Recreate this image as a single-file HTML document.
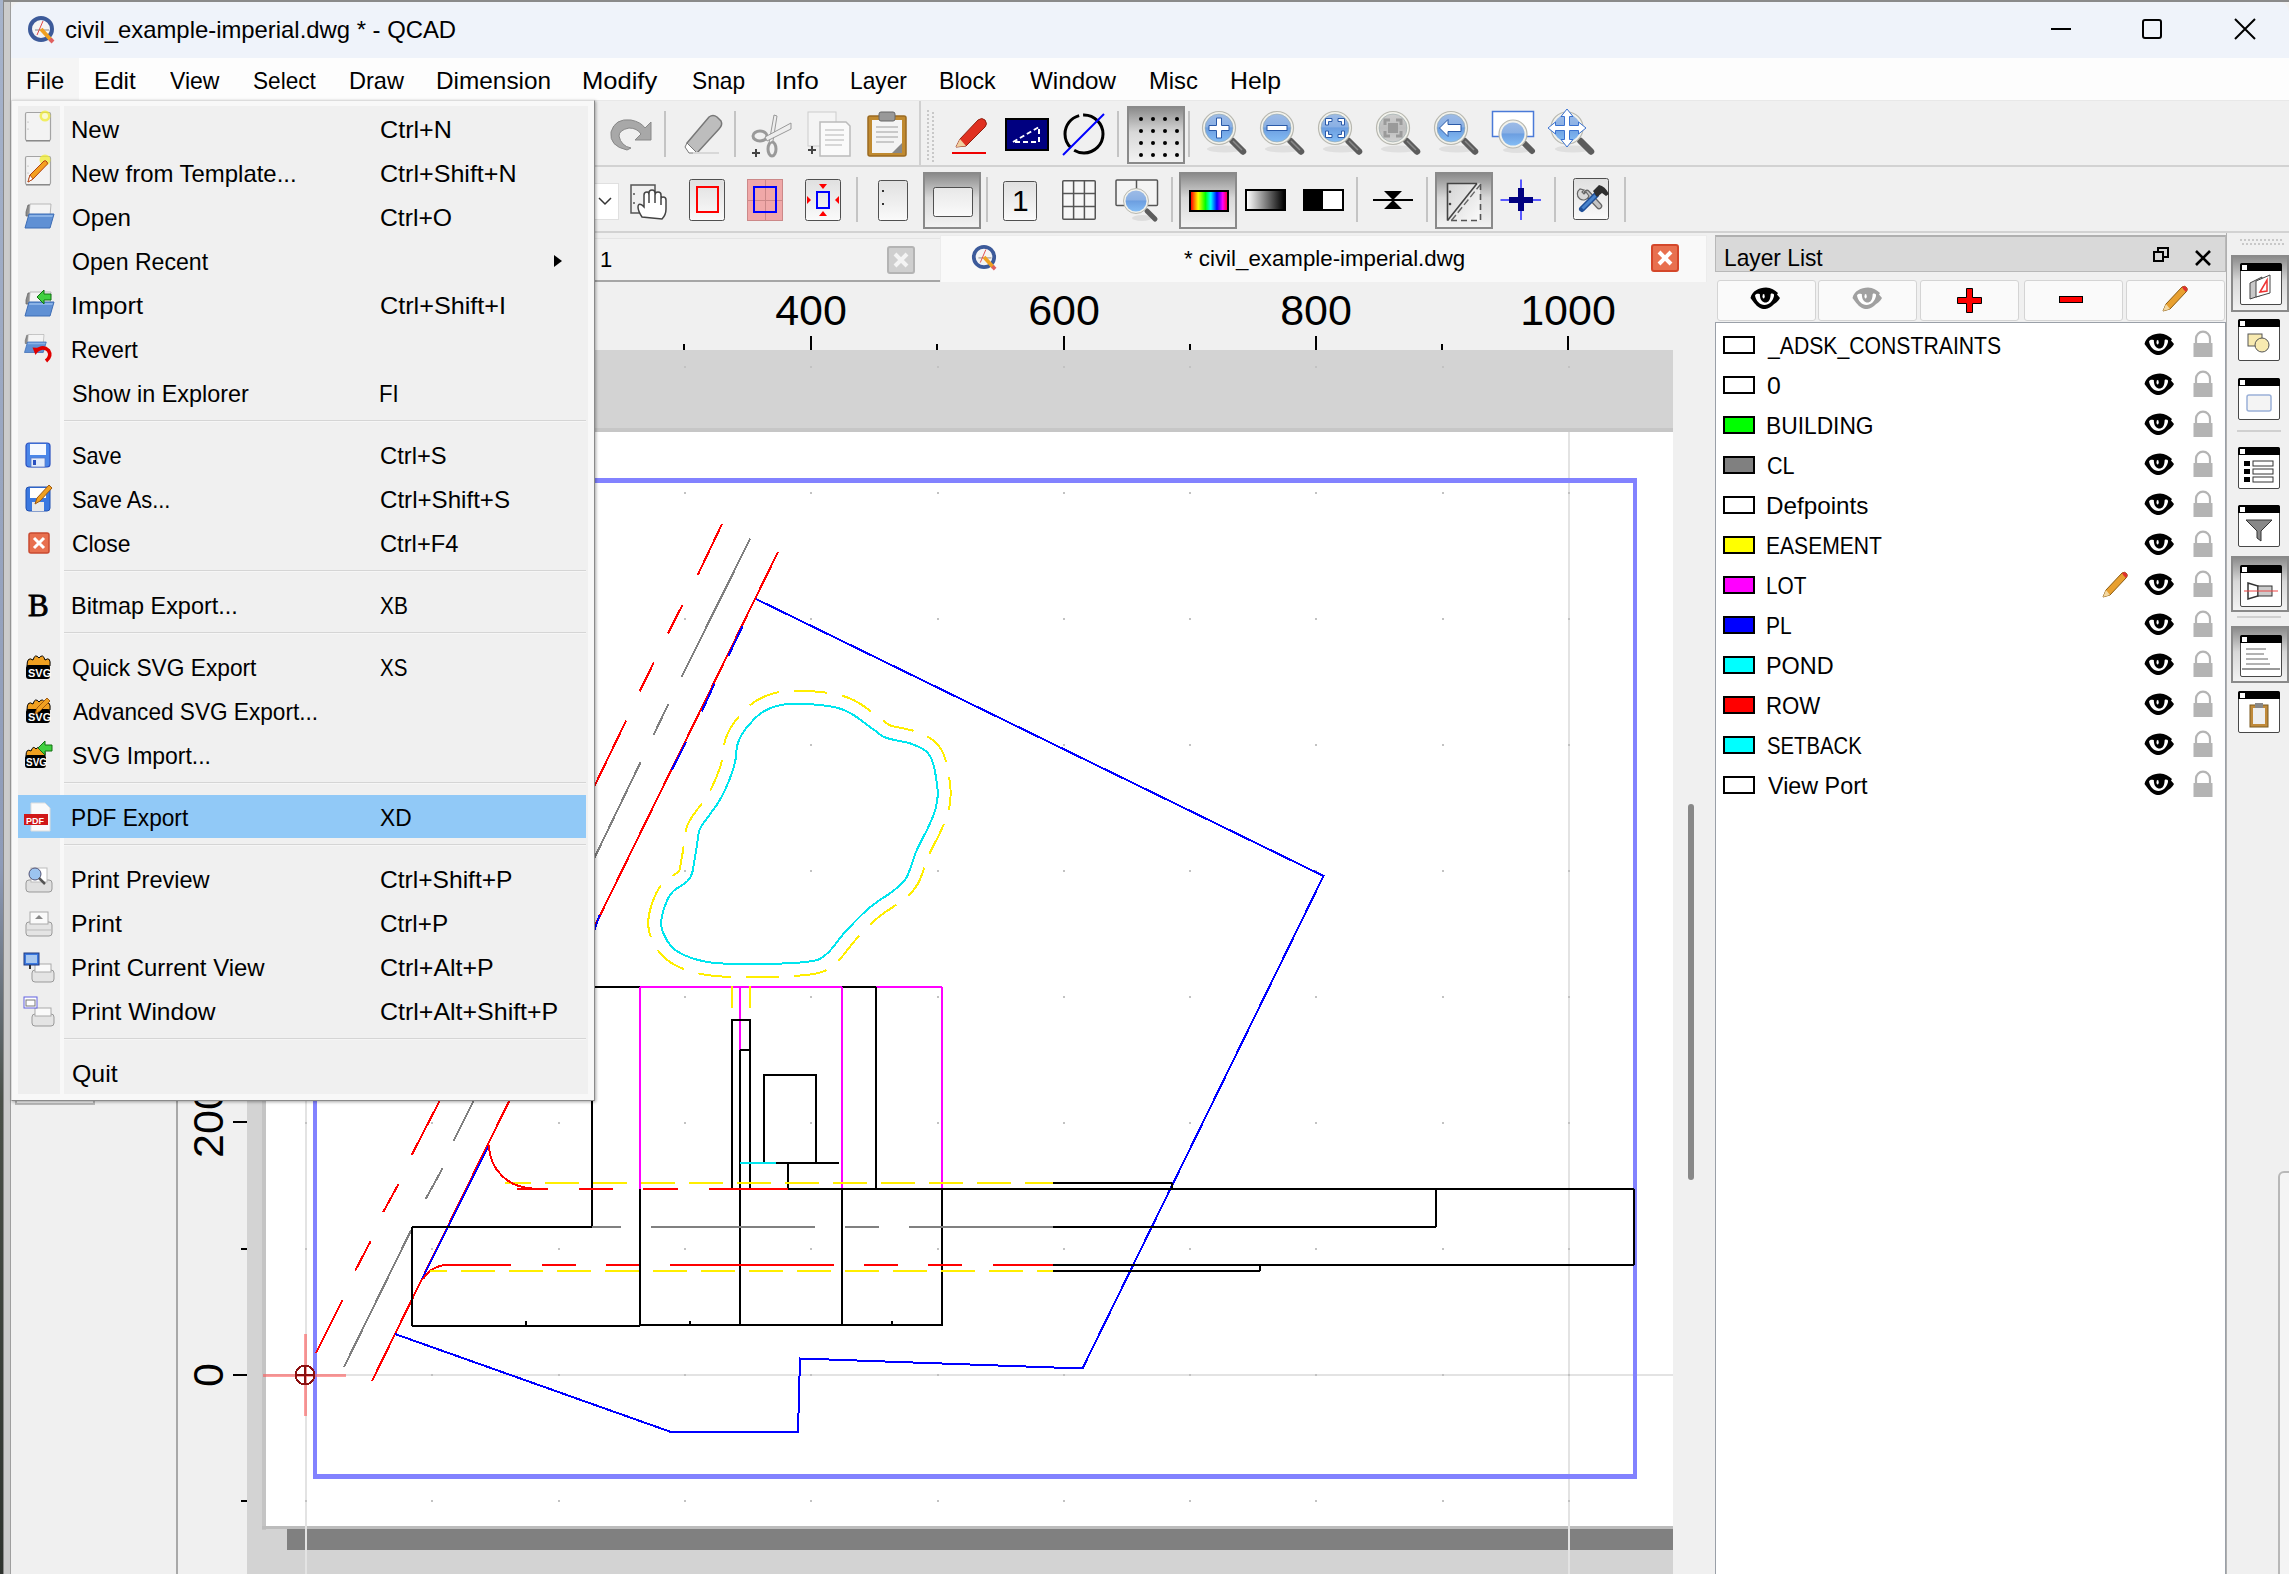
<!DOCTYPE html>
<html><head><meta charset="utf-8">
<style>
*{box-sizing:border-box;margin:0;padding:0}
html,body{width:2289px;height:1574px;overflow:hidden;background:#f0f0f0;font-family:"Liberation Sans",sans-serif;color:#000}
.a{position:absolute}
.t{position:absolute;white-space:pre;font-size:24px;line-height:28px;color:#000}
svg{position:absolute;overflow:visible}
</style></head><body>
<svg width="0" height="0" style="position:absolute"><defs>
<linearGradient id="lensblue" x1="0" y1="0" x2="0" y2="1"><stop offset="0" stop-color="#9dbbe6"/><stop offset="0.45" stop-color="#8ab0e4"/><stop offset="0.5" stop-color="#6c9ee0"/><stop offset="1" stop-color="#84bcf4"/></linearGradient>
<linearGradient id="lensgray" x1="0" y1="0" x2="0" y2="1"><stop offset="0" stop-color="#cfcfcf"/><stop offset="0.5" stop-color="#bdbdbd"/><stop offset="1" stop-color="#d0d0d0"/></linearGradient>
</defs></svg>

<div class="a" style="left:0px;top:0px;width:2289px;height:2px;background:#8a8a8a"></div>
<div class="a" style="left:0px;top:0px;width:3px;height:1574px;background:linear-gradient(#a6b3cb,#8e9bb8 55%,#4a5048 70%,#2e332e)"></div>
<div class="a" style="left:3px;top:2px;width:8px;height:1572px;background:#cbcbcb;border-left:1.5px solid #888;border-right:1.5px solid #9e9e9e"></div>
<div class="a" style="left:11px;top:2px;width:2278px;height:56px;background:#eff3fa;border-top-left-radius:10px;border-top-right-radius:10px"></div>
<svg class="a" style="left:27px;top:15px;" width="30" height="30" viewBox="0 0 30 30"><circle cx="14" cy="14" r="11" fill="#f4f4f4" stroke="#3c5a9a" stroke-width="4"/>
<line x1="8" y1="15" x2="22" y2="15" stroke="#888" stroke-width="1"/><line x1="10" y1="20" x2="16" y2="6" stroke="#d44" stroke-width="1"/>
<line x1="14" y1="14" x2="24" y2="25" stroke="#f0a020" stroke-width="4"/><line x1="23" y1="24" x2="26" y2="27" stroke="#e06060" stroke-width="4"/></svg>
<div class="t" style="left:65.31px;top:16px;font-size:24px;line-height:28px;transform:scaleX(0.994);transform-origin:0 0;">civil_example-imperial.dwg * - QCAD</div>
<div class="a" style="left:2051px;top:28px;width:20px;height:2px;background:#000"></div>
<div class="a" style="left:2142px;top:19px;width:20px;height:20px;border:2px solid #000;border-radius:3px"></div>
<svg class="a" style="left:2235px;top:19px;" width="20" height="20" viewBox="0 0 20 20"><path d="M0 0L20 20M20 0L0 20" stroke="#000" stroke-width="2"/></svg>
<div class="a" style="left:11px;top:58px;width:2278px;height:43px;background:#fdfdfd;border-bottom:1px solid #e8e8e8"></div>
<div class="a" style="left:11px;top:58px;width:68px;height:42px;background:#f5f5f5"></div>
<div class="t" style="left:25.53px;top:67px;font-size:24px;line-height:28px;transform:scaleX(0.986);transform-origin:0 0;">File</div>
<div class="t" style="left:94.48px;top:67px;font-size:24px;line-height:28px;transform:scaleX(1.008);transform-origin:0 0;">Edit</div>
<div class="t" style="left:169.90px;top:67px;font-size:24px;line-height:28px;transform:scaleX(0.958);transform-origin:0 0;">View</div>
<div class="t" style="left:252.76px;top:67px;font-size:24px;line-height:28px;transform:scaleX(0.942);transform-origin:0 0;">Select</div>
<div class="t" style="left:348.74px;top:67px;font-size:24px;line-height:28px;transform:scaleX(0.981);transform-origin:0 0;">Draw</div>
<div class="t" style="left:435.97px;top:67px;font-size:24px;line-height:28px;transform:scaleX(1.015);transform-origin:0 0;">Dimension</div>
<div class="t" style="left:582.07px;top:67px;font-size:24px;line-height:28px;transform:scaleX(1.064);transform-origin:0 0;">Modify</div>
<div class="t" style="left:691.65px;top:67px;font-size:24px;line-height:28px;transform:scaleX(0.946);transform-origin:0 0;">Snap</div>
<div class="t" style="left:775.42px;top:67px;font-size:24px;line-height:28px;transform:scaleX(1.092);transform-origin:0 0;">Info</div>
<div class="t" style="left:850.10px;top:67px;font-size:24px;line-height:28px;transform:scaleX(0.948);transform-origin:0 0;">Layer</div>
<div class="t" style="left:938.97px;top:67px;font-size:24px;line-height:28px;transform:scaleX(0.965);transform-origin:0 0;">Block</div>
<div class="t" style="left:1030.40px;top:67px;font-size:24px;line-height:28px;transform:scaleX(1.008);transform-origin:0 0;">Window</div>
<div class="t" style="left:1149.02px;top:67px;font-size:24px;line-height:28px;transform:scaleX(0.991);transform-origin:0 0;">Misc</div>
<div class="t" style="left:1229.74px;top:67px;font-size:24px;line-height:28px;transform:scaleX(1.032);transform-origin:0 0;">Help</div>
<div class="a" style="left:11px;top:101px;width:2278px;height:131px;background:#f0f0f0"></div>
<div class="a" style="left:11px;top:165px;width:2278px;height:2px;background:#d2d2d2"></div>
<div class="a" style="left:11px;top:231px;width:2278px;height:2px;background:#d2d2d2"></div>
<div class="a" style="left:11px;top:233px;width:166px;height:1341px;background:#f0f0f0"></div>
<div class="a" style="left:176px;top:233px;width:2px;height:1341px;background:#a8a8a8"></div>
<div class="a" style="left:15px;top:1060px;width:80px;height:45px;border:2px solid #b8b8b8;border-top:none"></div>
<div class="a" style="left:178px;top:233px;width:1537px;height:49px;background:#f0f0f0"></div>
<div class="a" style="left:178px;top:238px;width:762px;height:42px;background:#f2f2f2;border-top:1px solid #e4e4e4"></div>
<div class="a" style="left:178px;top:280px;width:762px;height:2px;background:#a6a6a6"></div>
<div class="a" style="left:940px;top:235px;width:767px;height:47px;background:#f9f9f9;border:1px solid #ececec;border-bottom:none"></div>
<div class="t" style="left:600px;top:247px;font-size:22px;line-height:26px;">1</div>
<div class="a" style="left:887px;top:246px;width:28px;height:28px;background:#cfcfcf;border:2px solid #b4b4b4;border-radius:3px"></div>
<svg class="a" style="left:893px;top:252px;" width="16" height="16" viewBox="0 0 16 16"><path d="M2 2L14 14M14 2L2 14" stroke="#f4f4f4" stroke-width="4"/></svg>
<svg class="a" style="left:970px;top:243px;transform:scale(0.93)" width="28" height="28" viewBox="0 0 28 28"><circle cx="14" cy="14" r="11" fill="#f4f4f4" stroke="#3c5a9a" stroke-width="4"/>
<line x1="8" y1="15" x2="22" y2="15" stroke="#888" stroke-width="1"/><line x1="10" y1="20" x2="16" y2="6" stroke="#d44" stroke-width="1"/>
<line x1="14" y1="14" x2="24" y2="25" stroke="#f0a020" stroke-width="4"/><line x1="23" y1="24" x2="26" y2="27" stroke="#e06060" stroke-width="4"/></svg>
<div class="t" style="left:1184.39px;top:246px;font-size:22px;line-height:26px;transform:scaleX(1.013);transform-origin:0 0;">* civil_example-imperial.dwg</div>
<div class="a" style="left:1651px;top:244px;width:28px;height:28px;background:#e8704f;border:2px solid #d4472a;border-radius:3px"></div>
<svg class="a" style="left:1657px;top:250px;" width="16" height="16" viewBox="0 0 16 16"><path d="M2 2L14 14M14 2L2 14" stroke="#fff" stroke-width="4"/></svg>
<div class="a" style="left:178px;top:282px;width:1495px;height:68px;background:#f0f0f0"></div>
<div class="a" style="left:178px;top:350px;width:69px;height:1224px;background:#f0f0f0"></div>
<div class="t" style="left:775.0px;top:285px;width:72px;text-align:center;font-size:43px;line-height:50px">400</div>
<div class="t" style="left:1028.0px;top:285px;width:72px;text-align:center;font-size:43px;line-height:50px">600</div>
<div class="t" style="left:1280.0px;top:285px;width:72px;text-align:center;font-size:43px;line-height:50px">800</div>
<div class="t" style="left:1520.0px;top:285px;width:96px;text-align:center;font-size:43px;line-height:50px">1000</div>
<div class="a" style="left:810.25px;top:336px;width:1.5px;height:14px;background:#000"></div>
<div class="a" style="left:1063.25px;top:336px;width:1.5px;height:14px;background:#000"></div>
<div class="a" style="left:1315.25px;top:336px;width:1.5px;height:14px;background:#000"></div>
<div class="a" style="left:1567.25px;top:336px;width:1.5px;height:14px;background:#000"></div>
<div class="a" style="left:683.25px;top:344px;width:1.5px;height:6px;background:#000"></div>
<div class="a" style="left:936.25px;top:344px;width:1.5px;height:6px;background:#000"></div>
<div class="a" style="left:1189.25px;top:344px;width:1.5px;height:6px;background:#000"></div>
<div class="a" style="left:1441.25px;top:344px;width:1.5px;height:6px;background:#000"></div>
<div class="a" style="left:233px;top:1121.25px;width:14px;height:1.5px;background:#000"></div>
<div class="a" style="left:233px;top:1374.25px;width:14px;height:1.5px;background:#000"></div>
<div class="a" style="left:241px;top:1248.25px;width:6px;height:1.5px;background:#000"></div>
<div class="a" style="left:241px;top:1500.25px;width:6px;height:1.5px;background:#000"></div>
<div class="t" style="left:160px;top:1097px;width:96px;height:50px;text-align:center;font-size:43px;line-height:50px;transform:rotate(-90deg);transform-origin:48px 25px">200</div>
<div class="t" style="left:160px;top:1350px;width:96px;height:50px;text-align:center;font-size:43px;line-height:50px;transform:rotate(-90deg);transform-origin:48px 25px">0</div>
<div class="a" style="left:247px;top:350px;width:1426px;height:1224px;background:#d3d3d3"></div>
<div class="a" style="left:266px;top:432px;width:1407px;height:1094px;background:#fff"></div>
<div class="a" style="left:262px;top:432px;width:4px;height:1098px;background:#c4c4c4"></div>
<div class="a" style="left:262px;top:1526px;width:1411px;height:3px;background:#bcbcbc"></div>
<div class="a" style="left:287px;top:1529px;width:1386px;height:21px;background:#808080"></div>
<div class="a" style="left:247px;top:428px;width:1426px;height:4px;background:#c6c6c6"></div>
<div class="a" style="left:1673px;top:282px;width:42px;height:1292px;background:#f0f0f0"></div>
<div class="a" style="left:1688px;top:804px;width:6px;height:376px;background:#888;border-radius:3px"></div>
<svg class="a" style="left:0;top:0" width="2289" height="1574" viewBox="0 0 2289 1574"><defs><clipPath id="cv"><rect x="247" y="350" width="1426" height="1224"/></clipPath></defs><g clip-path="url(#cv)" shape-rendering="crispEdges"><line x1="306" y1="350" x2="306" y2="1574" stroke="#e3e3e3" stroke-width="2"/><line x1="1568.5" y1="432" x2="1568.5" y2="1574" stroke="#e3e3e3" stroke-width="2"/><line x1="266" y1="1375" x2="1673" y2="1375" stroke="#e3e3e3" stroke-width="2"/><rect x="305" y="1500" width="2" height="2" fill="#c2c2c2"/><rect x="305" y="1374" width="2" height="2" fill="#c2c2c2"/><rect x="305" y="1248" width="2" height="2" fill="#c2c2c2"/><rect x="305" y="1122" width="2" height="2" fill="#c2c2c2"/><rect x="305" y="996" width="2" height="2" fill="#c2c2c2"/><rect x="305" y="870" width="2" height="2" fill="#c2c2c2"/><rect x="305" y="744" width="2" height="2" fill="#c2c2c2"/><rect x="305" y="618" width="2" height="2" fill="#c2c2c2"/><rect x="305" y="492" width="2" height="2" fill="#c2c2c2"/><rect x="305" y="366" width="2" height="2" fill="#c2c2c2"/><rect x="431" y="1500" width="2" height="2" fill="#c2c2c2"/><rect x="431" y="1374" width="2" height="2" fill="#c2c2c2"/><rect x="431" y="1248" width="2" height="2" fill="#c2c2c2"/><rect x="431" y="1122" width="2" height="2" fill="#c2c2c2"/><rect x="431" y="996" width="2" height="2" fill="#c2c2c2"/><rect x="431" y="870" width="2" height="2" fill="#c2c2c2"/><rect x="431" y="744" width="2" height="2" fill="#c2c2c2"/><rect x="431" y="618" width="2" height="2" fill="#c2c2c2"/><rect x="431" y="492" width="2" height="2" fill="#c2c2c2"/><rect x="431" y="366" width="2" height="2" fill="#c2c2c2"/><rect x="558" y="1500" width="2" height="2" fill="#c2c2c2"/><rect x="558" y="1374" width="2" height="2" fill="#c2c2c2"/><rect x="558" y="1248" width="2" height="2" fill="#c2c2c2"/><rect x="558" y="1122" width="2" height="2" fill="#c2c2c2"/><rect x="558" y="996" width="2" height="2" fill="#c2c2c2"/><rect x="558" y="870" width="2" height="2" fill="#c2c2c2"/><rect x="558" y="744" width="2" height="2" fill="#c2c2c2"/><rect x="558" y="618" width="2" height="2" fill="#c2c2c2"/><rect x="558" y="492" width="2" height="2" fill="#c2c2c2"/><rect x="558" y="366" width="2" height="2" fill="#c2c2c2"/><rect x="684" y="1500" width="2" height="2" fill="#c2c2c2"/><rect x="684" y="1374" width="2" height="2" fill="#c2c2c2"/><rect x="684" y="1248" width="2" height="2" fill="#c2c2c2"/><rect x="684" y="1122" width="2" height="2" fill="#c2c2c2"/><rect x="684" y="996" width="2" height="2" fill="#c2c2c2"/><rect x="684" y="870" width="2" height="2" fill="#c2c2c2"/><rect x="684" y="744" width="2" height="2" fill="#c2c2c2"/><rect x="684" y="618" width="2" height="2" fill="#c2c2c2"/><rect x="684" y="492" width="2" height="2" fill="#c2c2c2"/><rect x="684" y="366" width="2" height="2" fill="#c2c2c2"/><rect x="810" y="1500" width="2" height="2" fill="#c2c2c2"/><rect x="810" y="1374" width="2" height="2" fill="#c2c2c2"/><rect x="810" y="1248" width="2" height="2" fill="#c2c2c2"/><rect x="810" y="1122" width="2" height="2" fill="#c2c2c2"/><rect x="810" y="996" width="2" height="2" fill="#c2c2c2"/><rect x="810" y="870" width="2" height="2" fill="#c2c2c2"/><rect x="810" y="744" width="2" height="2" fill="#c2c2c2"/><rect x="810" y="618" width="2" height="2" fill="#c2c2c2"/><rect x="810" y="492" width="2" height="2" fill="#c2c2c2"/><rect x="810" y="366" width="2" height="2" fill="#c2c2c2"/><rect x="937" y="1500" width="2" height="2" fill="#c2c2c2"/><rect x="937" y="1374" width="2" height="2" fill="#c2c2c2"/><rect x="937" y="1248" width="2" height="2" fill="#c2c2c2"/><rect x="937" y="1122" width="2" height="2" fill="#c2c2c2"/><rect x="937" y="996" width="2" height="2" fill="#c2c2c2"/><rect x="937" y="870" width="2" height="2" fill="#c2c2c2"/><rect x="937" y="744" width="2" height="2" fill="#c2c2c2"/><rect x="937" y="618" width="2" height="2" fill="#c2c2c2"/><rect x="937" y="492" width="2" height="2" fill="#c2c2c2"/><rect x="937" y="366" width="2" height="2" fill="#c2c2c2"/><rect x="1063" y="1500" width="2" height="2" fill="#c2c2c2"/><rect x="1063" y="1374" width="2" height="2" fill="#c2c2c2"/><rect x="1063" y="1248" width="2" height="2" fill="#c2c2c2"/><rect x="1063" y="1122" width="2" height="2" fill="#c2c2c2"/><rect x="1063" y="996" width="2" height="2" fill="#c2c2c2"/><rect x="1063" y="870" width="2" height="2" fill="#c2c2c2"/><rect x="1063" y="744" width="2" height="2" fill="#c2c2c2"/><rect x="1063" y="618" width="2" height="2" fill="#c2c2c2"/><rect x="1063" y="492" width="2" height="2" fill="#c2c2c2"/><rect x="1063" y="366" width="2" height="2" fill="#c2c2c2"/><rect x="1189" y="1500" width="2" height="2" fill="#c2c2c2"/><rect x="1189" y="1374" width="2" height="2" fill="#c2c2c2"/><rect x="1189" y="1248" width="2" height="2" fill="#c2c2c2"/><rect x="1189" y="1122" width="2" height="2" fill="#c2c2c2"/><rect x="1189" y="996" width="2" height="2" fill="#c2c2c2"/><rect x="1189" y="870" width="2" height="2" fill="#c2c2c2"/><rect x="1189" y="744" width="2" height="2" fill="#c2c2c2"/><rect x="1189" y="618" width="2" height="2" fill="#c2c2c2"/><rect x="1189" y="492" width="2" height="2" fill="#c2c2c2"/><rect x="1189" y="366" width="2" height="2" fill="#c2c2c2"/><rect x="1315" y="1500" width="2" height="2" fill="#c2c2c2"/><rect x="1315" y="1374" width="2" height="2" fill="#c2c2c2"/><rect x="1315" y="1248" width="2" height="2" fill="#c2c2c2"/><rect x="1315" y="1122" width="2" height="2" fill="#c2c2c2"/><rect x="1315" y="996" width="2" height="2" fill="#c2c2c2"/><rect x="1315" y="870" width="2" height="2" fill="#c2c2c2"/><rect x="1315" y="744" width="2" height="2" fill="#c2c2c2"/><rect x="1315" y="618" width="2" height="2" fill="#c2c2c2"/><rect x="1315" y="492" width="2" height="2" fill="#c2c2c2"/><rect x="1315" y="366" width="2" height="2" fill="#c2c2c2"/><rect x="1442" y="1500" width="2" height="2" fill="#c2c2c2"/><rect x="1442" y="1374" width="2" height="2" fill="#c2c2c2"/><rect x="1442" y="1248" width="2" height="2" fill="#c2c2c2"/><rect x="1442" y="1122" width="2" height="2" fill="#c2c2c2"/><rect x="1442" y="996" width="2" height="2" fill="#c2c2c2"/><rect x="1442" y="870" width="2" height="2" fill="#c2c2c2"/><rect x="1442" y="744" width="2" height="2" fill="#c2c2c2"/><rect x="1442" y="618" width="2" height="2" fill="#c2c2c2"/><rect x="1442" y="492" width="2" height="2" fill="#c2c2c2"/><rect x="1442" y="366" width="2" height="2" fill="#c2c2c2"/><rect x="1568" y="1500" width="2" height="2" fill="#c2c2c2"/><rect x="1568" y="1374" width="2" height="2" fill="#c2c2c2"/><rect x="1568" y="1248" width="2" height="2" fill="#c2c2c2"/><rect x="1568" y="1122" width="2" height="2" fill="#c2c2c2"/><rect x="1568" y="996" width="2" height="2" fill="#c2c2c2"/><rect x="1568" y="870" width="2" height="2" fill="#c2c2c2"/><rect x="1568" y="744" width="2" height="2" fill="#c2c2c2"/><rect x="1568" y="618" width="2" height="2" fill="#c2c2c2"/><rect x="1568" y="492" width="2" height="2" fill="#c2c2c2"/><rect x="1568" y="366" width="2" height="2" fill="#c2c2c2"/><rect x="313" y="478" width="1324" height="5" fill="#8282ff"/><rect x="313" y="1474" width="1324" height="5" fill="#8282ff"/><rect x="313" y="478" width="4" height="1001" fill="#8282ff"/><rect x="1633" y="478" width="4" height="1001" fill="#8282ff"/><line x1="316" y1="1353" x2="342.6" y2="1299.8" stroke="#ff0000" stroke-width="2"/><line x1="355.3" y1="1270.6" x2="370.5" y2="1241.4" stroke="#ff0000" stroke-width="2"/><line x1="383.3" y1="1212" x2="398.5" y2="1184" stroke="#ff0000" stroke-width="2"/><line x1="411.7" y1="1155" x2="455" y2="1071" stroke="#ff0000" stroke-width="2"/><line x1="580" y1="816" x2="626.2" y2="720.5" stroke="#ff0000" stroke-width="2"/><line x1="639.6" y1="691.5" x2="653.9" y2="662.4" stroke="#ff0000" stroke-width="2"/><line x1="668" y1="633.3" x2="682.6" y2="604.7" stroke="#ff0000" stroke-width="2"/><line x1="697.7" y1="575" x2="722" y2="524" stroke="#ff0000" stroke-width="2"/><line x1="344" y1="1367" x2="411.2" y2="1230" stroke="#808080" stroke-width="2"/><line x1="425.7" y1="1199" x2="442.5" y2="1168.4" stroke="#808080" stroke-width="2"/><line x1="453.6" y1="1141" x2="490" y2="1068" stroke="#808080" stroke-width="2"/><line x1="580" y1="888" x2="640.5" y2="762.3" stroke="#808080" stroke-width="2"/><line x1="653.4" y1="735.3" x2="668.2" y2="704.3" stroke="#808080" stroke-width="2"/><line x1="681.6" y1="677" x2="750.3" y2="538.4" stroke="#808080" stroke-width="2"/><line x1="372" y1="1381" x2="778" y2="552" stroke="#ff0000" stroke-width="2"/><line x1="422" y1="1279" x2="489" y2="1145" stroke="#0000ff" stroke-width="2"/><line x1="594.6" y1="930" x2="599.7" y2="914.8" stroke="#0000ff" stroke-width="2"/><line x1="671.8" y1="770" x2="686" y2="742" stroke="#0000ff" stroke-width="2"/><line x1="701.8" y1="711.5" x2="714.5" y2="683.6" stroke="#0000ff" stroke-width="2"/><line x1="728.5" y1="655.6" x2="742.5" y2="626.4" stroke="#0000ff" stroke-width="2"/><polyline points="756.0,599.0 1323.5,876.0 1082.5,1368.5 800.0,1358.5 798.0,1432.0 671.0,1432.0 395.0,1334.0" fill="none" stroke="#0000ff" stroke-width="2" stroke-linejoin="miter"/><polygon points="661.7,917.8 662.4,914.1 663.5,910.1 665.0,905.8 666.6,901.5 668.6,897.5 670.8,894.0 673.5,891.0 676.8,888.5 680.3,886.2 683.8,883.9 686.9,881.6 689.3,879.0 690.9,876.2 692.1,873.2 692.8,870.2 693.3,867.0 693.8,863.8 694.4,860.6 695.1,857.2 695.6,853.6 696.2,850.0 696.7,846.4 697.2,843.0 697.7,840.0 698.1,837.5 698.3,835.5 698.5,833.7 698.9,831.9 699.7,829.7 701.0,827.0 703.1,823.6 705.9,819.7 709.1,815.4 712.3,811.1 715.4,806.9 718.0,803.0 720.1,799.4 722.0,796.0 723.6,792.8 725.2,789.5 726.6,786.3 728.0,783.0 729.4,779.7 730.6,776.3 731.8,773.0 732.9,769.7 733.9,766.4 734.8,763.0 735.5,759.6 735.9,756.1 736.2,752.6 736.6,749.2 737.1,745.9 738.0,742.7 739.2,739.7 740.6,736.8 742.1,734.0 743.9,731.3 745.8,728.7 748.0,726.0 750.4,723.3 752.9,720.5 755.6,717.7 758.6,715.1 761.7,712.7 765.0,710.7 768.4,709.0 771.9,707.5 775.5,706.3 779.5,705.3 783.8,704.5 788.6,704.0 794.2,703.7 800.5,703.8 807.2,704.0 813.9,704.5 820.2,705.0 825.7,705.7 830.4,706.4 834.5,707.2 838.2,708.1 841.7,709.2 845.2,710.7 849.0,712.4 853.1,714.7 857.3,717.5 861.5,720.6 865.6,723.7 869.4,726.6 872.8,729.0 875.5,730.9 877.5,732.6 879.2,734.0 881.0,735.2 883.1,736.5 886.0,737.7 889.8,738.9 894.3,739.9 899.3,740.9 904.2,741.9 908.9,743.0 913.0,744.4 916.5,745.9 919.8,747.3 922.8,748.9 925.5,750.8 927.9,753.1 930.0,756.0 931.8,759.7 933.3,764.1 934.5,769.0 935.4,773.9 936.2,778.7 936.8,783.0 937.3,786.7 937.6,790.2 937.6,793.4 937.6,796.6 937.3,799.7 936.8,803.0 936.1,806.3 935.3,809.6 934.2,812.8 933.0,816.2 931.6,819.7 930.0,823.5 928.1,827.6 925.9,832.0 923.5,836.6 921.1,841.3 918.7,845.9 916.6,850.5 914.8,855.1 913.1,860.0 911.6,864.8 910.0,869.4 908.3,873.7 906.5,877.4 904.6,880.4 902.6,882.8 900.6,884.8 898.4,886.7 895.9,888.7 893.0,891.0 889.7,893.5 885.9,896.1 881.9,898.7 877.7,901.5 873.5,904.5 869.5,907.7 865.5,911.2 861.5,915.0 857.6,918.9 853.6,923.0 849.7,927.0 846.0,931.0 842.4,935.1 839.0,939.5 835.6,943.9 832.3,948.1 829.0,951.8 825.7,954.8 822.7,957.0 820.2,958.6 817.7,959.8 814.7,960.6 810.8,961.3 805.5,962.0 798.4,962.7 789.7,963.2 780.0,963.6 770.1,963.8 760.4,964.0 751.6,964.0 743.6,964.0 735.8,963.9 728.2,963.8 721.0,963.4 714.2,962.9 707.8,962.0 701.8,960.8 696.1,959.4 690.8,957.7 685.9,955.8 681.4,953.7 677.5,951.5 674.1,949.1 671.3,946.3 669.0,943.4 667.0,940.5 665.4,937.5 664.0,934.6 662.8,931.9 662.0,929.3 661.4,926.6 661.2,923.9 661.3,921.0" fill="none" stroke="#00e5ee" stroke-width="2" stroke-linejoin="miter"/><polygon points="648.9,915.6 649.8,911.1 651.1,906.3 652.7,901.3 654.8,896.3 657.2,891.3 660.4,886.2 664.7,881.5 669.2,877.9 673.2,875.3 676.4,873.2 678.2,871.9 678.9,871.2 679.2,870.6 679.6,869.4 680.1,867.5 680.5,865.0 681.0,861.7 681.6,858.2 682.3,854.9 682.8,851.6 683.3,848.1 683.8,844.5 684.3,840.9 684.9,837.9 685.2,835.8 685.4,834.1 685.7,831.6 686.4,828.2 687.7,824.5 689.7,820.6 692.3,816.4 695.4,812.0 698.7,807.6 701.9,803.4 704.7,799.5 707.0,796.1 708.8,793.0 710.5,790.0 712.0,787.0 713.3,784.1 714.7,781.1 716.0,778.0 717.3,774.9 718.4,771.8 719.5,768.8 720.5,765.8 721.4,762.8 722.1,760.1 722.6,757.6 723.0,754.8 723.3,751.4 723.7,747.5 724.4,743.1 725.7,738.6 727.3,734.5 729.0,730.8 731.0,727.3 733.2,723.9 735.5,720.7 738.0,717.7 740.6,714.6 743.5,711.5 746.7,708.3 750.3,705.1 754.3,702.0 758.6,699.4 762.9,697.2 767.3,695.4 771.9,693.8 776.8,692.6 782.0,691.7 787.6,691.0 793.9,690.7 800.8,690.8 807.8,691.0 814.9,691.5 821.5,692.1 827.4,692.8 832.6,693.6 837.2,694.5 841.7,695.6 846.1,697.0 850.4,698.7 855.0,700.8 859.9,703.6 864.7,706.8 869.3,710.1 873.5,713.3 877.2,716.1 880.4,718.5 883.3,720.6 885.7,722.5 887.1,723.7 887.9,724.3 888.8,724.8 890.4,725.5 893.1,726.3 897.0,727.2 901.8,728.1 907.1,729.2 912.5,730.5 917.6,732.2 921.7,733.9 925.5,735.7 929.6,737.8 933.7,740.8 937.7,744.6 941.2,749.3 943.9,754.8 945.8,760.5 947.2,766.2 948.2,771.7 949.0,776.8 949.7,781.2 950.2,785.4 950.5,789.4 950.6,793.4 950.5,797.3 950.2,801.2 949.6,805.2 948.8,809.2 947.8,813.2 946.5,817.0 945.1,820.8 943.6,824.6 941.9,828.7 939.8,833.3 937.5,838.0 935.0,842.6 932.6,847.2 930.4,851.6 928.5,855.6 927.0,859.6 925.5,864.1 923.9,868.9 922.2,873.8 920.2,878.9 917.8,883.8 915.1,888.0 912.3,891.5 909.4,894.4 906.6,896.8 904.0,898.9 901.0,901.3 897.2,904.1 893.1,906.9 889.1,909.6 885.1,912.2 881.3,914.9 877.9,917.7 874.3,920.8 870.6,924.3 866.8,928.1 863.0,932.0 859.2,935.9 855.7,939.7 852.5,943.4 849.3,947.5 845.9,951.9 842.3,956.4 838.3,960.9 834.0,964.8 830.1,967.7 826.4,970.0 822.1,972.0 817.5,973.3 812.8,974.1 806.9,974.9 799.3,975.6 790.3,976.2 780.4,976.6 770.3,976.8 760.5,977.0 751.6,977.0 743.5,977.0 735.6,976.9 727.8,976.8 720.2,976.4 712.8,975.8 705.7,974.8 698.9,973.5 692.5,971.9 686.5,970.0 680.8,967.8 675.5,965.3 670.5,962.4 665.8,959.0 661.8,955.1 658.5,951.1 655.9,947.2 653.9,943.5 652.2,940.0 650.7,936.5 649.4,932.6 648.6,928.5 648.2,924.2 648.3,920.0" fill="none" stroke="#ffee00" stroke-width="2" stroke-dasharray="33 15" stroke-linejoin="miter"/><line x1="594" y1="986.6" x2="640" y2="986.6" stroke="#000000" stroke-width="2"/><line x1="640" y1="986.6" x2="842" y2="986.6" stroke="#ff00ff" stroke-width="2"/><line x1="842" y1="986.6" x2="875.5" y2="986.6" stroke="#000000" stroke-width="2"/><line x1="875.5" y1="986.6" x2="942" y2="986.6" stroke="#ff00ff" stroke-width="2"/><line x1="640" y1="986.6" x2="640" y2="1189" stroke="#ff00ff" stroke-width="2"/><line x1="842" y1="986.6" x2="842" y2="1189" stroke="#ff00ff" stroke-width="2"/><line x1="942" y1="986.6" x2="942" y2="1189" stroke="#ff00ff" stroke-width="2"/><line x1="740" y1="986.6" x2="740" y2="1050" stroke="#ff00ff" stroke-width="2"/><line x1="732" y1="986" x2="732" y2="1008" stroke="#ffee00" stroke-width="2"/><line x1="750" y1="986" x2="750" y2="1008" stroke="#ffee00" stroke-width="2"/><rect x="732" y="1020" width="18" height="169" fill="none" stroke="#000000" stroke-width="2"/><line x1="740" y1="1050" x2="740" y2="1325" stroke="#000000" stroke-width="2"/><line x1="740" y1="1050" x2="750" y2="1050" stroke="#000000" stroke-width="2"/><rect x="763.6" y="1075" width="52.8" height="87.7" fill="none" stroke="#000000" stroke-width="2"/><line x1="740" y1="1162.7" x2="775.5" y2="1162.7" stroke="#00e5ee" stroke-width="2"/><line x1="775.5" y1="1162.7" x2="838.8" y2="1162.7" stroke="#000000" stroke-width="2"/><line x1="788" y1="1162.7" x2="788" y2="1189" stroke="#000000" stroke-width="2"/><line x1="875.5" y1="986.6" x2="875.5" y2="1189" stroke="#000000" stroke-width="2"/><line x1="592" y1="1000" x2="592" y2="1226.6" stroke="#000000" stroke-width="2"/><line x1="412" y1="1226.6" x2="592" y2="1226.6" stroke="#000000" stroke-width="2"/><line x1="412" y1="1226.6" x2="412" y2="1326" stroke="#000000" stroke-width="2"/><line x1="412" y1="1326" x2="640" y2="1326" stroke="#000000" stroke-width="2"/><line x1="640" y1="1325" x2="942" y2="1325" stroke="#000000" stroke-width="2"/><line x1="526" y1="1326" x2="526" y2="1321" stroke="#000000" stroke-width="2"/><line x1="690" y1="1326" x2="690" y2="1321" stroke="#000000" stroke-width="2"/><line x1="892" y1="1326" x2="892" y2="1321" stroke="#000000" stroke-width="2"/><line x1="640" y1="1189" x2="640" y2="1326" stroke="#000000" stroke-width="2"/><line x1="842" y1="1189" x2="842" y2="1326" stroke="#000000" stroke-width="2"/><line x1="942" y1="1189" x2="942" y2="1326" stroke="#000000" stroke-width="2"/><line x1="788" y1="1189" x2="1634" y2="1189" stroke="#000000" stroke-width="2"/><line x1="1634" y1="1189" x2="1634" y2="1265" stroke="#000000" stroke-width="2"/><line x1="1053" y1="1265" x2="1634" y2="1265" stroke="#000000" stroke-width="2"/><line x1="1053" y1="1226.5" x2="1436" y2="1226.5" stroke="#000000" stroke-width="2"/><line x1="1436" y1="1189" x2="1436" y2="1226.5" stroke="#000000" stroke-width="2"/><line x1="1053" y1="1182.5" x2="1172" y2="1182.5" stroke="#000000" stroke-width="2"/><line x1="1172" y1="1182.5" x2="1172" y2="1189" stroke="#000000" stroke-width="2"/><line x1="1053" y1="1270.5" x2="1260" y2="1270.5" stroke="#000000" stroke-width="2"/><line x1="1260" y1="1265" x2="1260" y2="1270.5" stroke="#000000" stroke-width="2"/><line x1="505" y1="1183" x2="1053" y2="1183" stroke="#ffee00" stroke-width="2" stroke-dasharray="33.5 14.5" stroke-dashoffset="7.6" shape-rendering="crispEdges"/><path d="M489 1145 A43 43 0 0 0 532 1188" fill="none" stroke="#ff0000" stroke-width="2"/><line x1="517" y1="1189" x2="548" y2="1189" stroke="#ff0000" stroke-width="2"/><line x1="579" y1="1189" x2="613" y2="1189" stroke="#ff0000" stroke-width="2"/><line x1="643" y1="1189" x2="678" y2="1189" stroke="#ff0000" stroke-width="2"/><line x1="709" y1="1189" x2="788" y2="1189" stroke="#ff0000" stroke-width="2"/><path d="M423 1279 A30 30 0 0 1 445 1265" fill="none" stroke="#ff0000" stroke-width="2"/><line x1="445" y1="1265" x2="1053" y2="1265" stroke="#ff0000" stroke-width="2" stroke-dasharray="66 31 34 30 33 31 164 30 34 30 34 31"/><line x1="430" y1="1270.5" x2="1053" y2="1270.5" stroke="#ffee00" stroke-width="2" stroke-dasharray="33.5 14.5" stroke-dashoffset="17" shape-rendering="crispEdges"/><line x1="592" y1="1226.5" x2="621" y2="1226.5" stroke="#808080" stroke-width="2"/><line x1="651" y1="1226.5" x2="815" y2="1226.5" stroke="#808080" stroke-width="2"/><line x1="845" y1="1226.5" x2="878.5" y2="1226.5" stroke="#808080" stroke-width="2"/><line x1="909" y1="1226.5" x2="1053" y2="1226.5" stroke="#808080" stroke-width="2"/><line x1="263" y1="1375" x2="346" y2="1375" stroke="#ff5050" stroke-width="3" stroke-opacity="0.55"/><line x1="305" y1="1334" x2="305" y2="1416" stroke="#ff5050" stroke-width="3" stroke-opacity="0.55"/><circle cx="305" cy="1375" r="9.5" fill="none" stroke="#8b1010" stroke-width="2"/><line x1="305" y1="1365" x2="305" y2="1385" stroke="#8b1010" stroke-width="1.5"/><line x1="295" y1="1375" x2="315" y2="1375" stroke="#8b1010" stroke-width="1.5"/></g></svg>
<div class="a" style="left:1715px;top:233px;width:511px;height:1341px;background:#f0f0f0"></div>
<div class="a" style="left:1715px;top:235px;width:511px;height:37px;background:#d9d9d9;border:1px solid #b8b8b8;border-top:2px solid #b0b0b0"></div>
<div class="t" style="left:1723.90px;top:244px;font-size:24px;line-height:28px;transform:scaleX(0.948);transform-origin:0 0;">Layer List</div>
<svg class="a" style="left:2153px;top:247px;" width="16" height="16" viewBox="0 0 16 16"><rect x="1" y="5" width="9" height="9" fill="none" stroke="#000" stroke-width="2"/><path d="M5 5V1H15V10H10" fill="none" stroke="#000" stroke-width="2"/></svg>
<svg class="a" style="left:2195px;top:250px;" width="16" height="16" viewBox="0 0 16 16"><path d="M1 1L15 15M15 1L1 15" stroke="#000" stroke-width="2.6"/></svg>
<div class="a" style="left:1717px;top:280px;width:99px;height:41px;background:#fafafa;border:1px solid #d4d4d4;border-radius:3px"></div>
<div class="a" style="left:1818px;top:280px;width:99px;height:41px;background:#fafafa;border:1px solid #d4d4d4;border-radius:3px"></div>
<div class="a" style="left:1920px;top:280px;width:99px;height:41px;background:#fafafa;border:1px solid #d4d4d4;border-radius:3px"></div>
<div class="a" style="left:2024px;top:280px;width:99px;height:41px;background:#fafafa;border:1px solid #d4d4d4;border-radius:3px"></div>
<div class="a" style="left:2126px;top:280px;width:99px;height:41px;background:#fafafa;border:1px solid #d4d4d4;border-radius:3px"></div>
<svg class="a" style="left:1750px;top:287px;" width="30" height="25" viewBox="0 0 30 25"><path d="M0.5 11 C2 4 9 0.5 16 0.5 C21 0.5 25 3 28 6 L27 7.5 L30 11 C28 15 25 16 22 19 C19 21.5 16 22 13 22 C8 21 5 17 2 13 Z" fill="#000"/><path d="M5 8.5 C5.5 6.5 8 6.5 9.5 7 L20.5 7 C22 6 24.5 6.5 24 9 C23 14 19 18 14.5 18 C10 18 6 14 5 8.5Z" fill="#fff"/><path d="M9.5 3 H21 L20.5 9 C20 13.5 18 15.5 15.5 15.5 C12.5 15.5 10.5 13 10 9.5Z" fill="#000"/><ellipse cx="13.6" cy="9.2" rx="1.1" ry="2.3" fill="#fff"/></svg>
<svg class="a" style="left:1852px;top:287px;" width="30" height="25" viewBox="0 0 30 25"><path d="M0.5 11 C2 4 9 0.5 16 0.5 C21 0.5 25 3 28 6 L27 7.5 L30 11 C28 15 25 16 22 19 C19 21.5 16 22 13 22 C8 21 5 17 2 13 Z" fill="#a0a0a0"/><path d="M5 8.5 C5.5 6.5 8 6.5 9.5 7 L20.5 7 C22 6 24.5 6.5 24 9 C23 14 19 18 14.5 18 C10 18 6 14 5 8.5Z" fill="#fff"/><path d="M9.5 3 H21 L20.5 9 C20 13.5 18 15.5 15.5 15.5 C12.5 15.5 10.5 13 10 9.5Z" fill="#a0a0a0"/><ellipse cx="13.6" cy="9.2" rx="1.1" ry="2.3" fill="#fff"/></svg>
<svg class="a" style="left:1957px;top:288px;" width="26" height="26" viewBox="0 0 26 26"><path d="M9.5 0.5 H15.5 V9.5 H24.5 V15.5 H15.5 V24.5 H9.5 V15.5 H0.5 V9.5 H9.5Z" fill="#f00" stroke="#000" stroke-width="1"/></svg>
<svg class="a" style="left:2059px;top:296px;" width="26" height="8" viewBox="0 0 26 8"><rect x="0.5" y="0.5" width="23" height="6" fill="#f00" stroke="#000" stroke-width="1"/></svg>
<svg class="a" style="left:2160px;top:284px;" width="30" height="30" viewBox="0 0 30 30"><path d="M3 27 L6 20 L22 3 Q25 1 27 4 Q28 6 26 8 L10 25 Z" fill="#e8a030" stroke="#8a5a10" stroke-width="1"/><path d="M22 3 Q25 1 27 4 Q28 6 26 8 L23.5 5.5Z" fill="#e03030"/><path d="M3 27 L6 20 L10 25Z" fill="#f4d8a0"/></svg>
<div class="a" style="left:1715px;top:322px;width:511px;height:1252px;background:#fff;border:1px solid #9aa0a8;border-bottom:none"></div>
<div class="a" style="left:1723px;top:336px;width:32px;height:18px;background:#fff;border:2px solid #000"></div>
<div class="t" style="left:1768.00px;top:332px;font-size:24px;line-height:28px;transform:scaleX(0.883);transform-origin:0 0;">_ADSK_CONSTRAINTS</div>
<svg class="a" style="left:2144px;top:332.7px;" width="30" height="23" viewBox="0 0 30 23"><path d="M0.5 11 C2 4 9 0.5 16 0.5 C21 0.5 25 3 28 6 L27 7.5 L30 11 C28 15 25 16 22 19 C19 21.5 16 22 13 22 C8 21 5 17 2 13 Z" fill="#000"/><path d="M5 8.5 C5.5 6.5 8 6.5 9.5 7 L20.5 7 C22 6 24.5 6.5 24 9 C23 14 19 18 14.5 18 C10 18 6 14 5 8.5Z" fill="#fff"/><path d="M9.5 3 H21 L20.5 9 C20 13.5 18 15.5 15.5 15.5 C12.5 15.5 10.5 13 10 9.5Z" fill="#000"/><ellipse cx="13.6" cy="9.2" rx="1.1" ry="2.3" fill="#fff"/></svg>
<svg class="a" style="left:2193px;top:330px;" width="20" height="27" viewBox="0 0 20 27"><path d="M3 13 V8.7 A7 7 0 0 1 17 8.7 V13" fill="none" stroke="#b4b4b4" stroke-width="2.2"/><rect x="0.5" y="13" width="19" height="14" fill="#b4b4b4"/></svg>
<div class="a" style="left:1723px;top:376px;width:32px;height:18px;background:#fff;border:2px solid #000"></div>
<div class="t" style="left:1766.97px;top:372px;font-size:24px;line-height:28px;transform:scaleX(1.033);transform-origin:0 0;">0</div>
<svg class="a" style="left:2144px;top:372.7px;" width="30" height="23" viewBox="0 0 30 23"><path d="M0.5 11 C2 4 9 0.5 16 0.5 C21 0.5 25 3 28 6 L27 7.5 L30 11 C28 15 25 16 22 19 C19 21.5 16 22 13 22 C8 21 5 17 2 13 Z" fill="#000"/><path d="M5 8.5 C5.5 6.5 8 6.5 9.5 7 L20.5 7 C22 6 24.5 6.5 24 9 C23 14 19 18 14.5 18 C10 18 6 14 5 8.5Z" fill="#fff"/><path d="M9.5 3 H21 L20.5 9 C20 13.5 18 15.5 15.5 15.5 C12.5 15.5 10.5 13 10 9.5Z" fill="#000"/><ellipse cx="13.6" cy="9.2" rx="1.1" ry="2.3" fill="#fff"/></svg>
<svg class="a" style="left:2193px;top:370px;" width="20" height="27" viewBox="0 0 20 27"><path d="M3 13 V8.7 A7 7 0 0 1 17 8.7 V13" fill="none" stroke="#b4b4b4" stroke-width="2.2"/><rect x="0.5" y="13" width="19" height="14" fill="#b4b4b4"/></svg>
<div class="a" style="left:1723px;top:416px;width:32px;height:18px;background:#00ff00;border:2px solid #000"></div>
<div class="t" style="left:1766.10px;top:412px;font-size:24px;line-height:28px;transform:scaleX(0.949);transform-origin:0 0;">BUILDING</div>
<svg class="a" style="left:2144px;top:412.7px;" width="30" height="23" viewBox="0 0 30 23"><path d="M0.5 11 C2 4 9 0.5 16 0.5 C21 0.5 25 3 28 6 L27 7.5 L30 11 C28 15 25 16 22 19 C19 21.5 16 22 13 22 C8 21 5 17 2 13 Z" fill="#000"/><path d="M5 8.5 C5.5 6.5 8 6.5 9.5 7 L20.5 7 C22 6 24.5 6.5 24 9 C23 14 19 18 14.5 18 C10 18 6 14 5 8.5Z" fill="#fff"/><path d="M9.5 3 H21 L20.5 9 C20 13.5 18 15.5 15.5 15.5 C12.5 15.5 10.5 13 10 9.5Z" fill="#000"/><ellipse cx="13.6" cy="9.2" rx="1.1" ry="2.3" fill="#fff"/></svg>
<svg class="a" style="left:2193px;top:410px;" width="20" height="27" viewBox="0 0 20 27"><path d="M3 13 V8.7 A7 7 0 0 1 17 8.7 V13" fill="none" stroke="#b4b4b4" stroke-width="2.2"/><rect x="0.5" y="13" width="19" height="14" fill="#b4b4b4"/></svg>
<div class="a" style="left:1723px;top:456px;width:32px;height:18px;background:#808080;border:2px solid #000"></div>
<div class="t" style="left:1767.10px;top:452px;font-size:24px;line-height:28px;transform:scaleX(0.9);transform-origin:0 0;">CL</div>
<svg class="a" style="left:2144px;top:452.7px;" width="30" height="23" viewBox="0 0 30 23"><path d="M0.5 11 C2 4 9 0.5 16 0.5 C21 0.5 25 3 28 6 L27 7.5 L30 11 C28 15 25 16 22 19 C19 21.5 16 22 13 22 C8 21 5 17 2 13 Z" fill="#000"/><path d="M5 8.5 C5.5 6.5 8 6.5 9.5 7 L20.5 7 C22 6 24.5 6.5 24 9 C23 14 19 18 14.5 18 C10 18 6 14 5 8.5Z" fill="#fff"/><path d="M9.5 3 H21 L20.5 9 C20 13.5 18 15.5 15.5 15.5 C12.5 15.5 10.5 13 10 9.5Z" fill="#000"/><ellipse cx="13.6" cy="9.2" rx="1.1" ry="2.3" fill="#fff"/></svg>
<svg class="a" style="left:2193px;top:450px;" width="20" height="27" viewBox="0 0 20 27"><path d="M3 13 V8.7 A7 7 0 0 1 17 8.7 V13" fill="none" stroke="#b4b4b4" stroke-width="2.2"/><rect x="0.5" y="13" width="19" height="14" fill="#b4b4b4"/></svg>
<div class="a" style="left:1723px;top:496px;width:32px;height:18px;background:#fff;border:2px solid #000"></div>
<div class="t" style="left:1765.98px;top:492px;font-size:24px;line-height:28px;transform:scaleX(1.01);transform-origin:0 0;">Defpoints</div>
<svg class="a" style="left:2144px;top:492.7px;" width="30" height="23" viewBox="0 0 30 23"><path d="M0.5 11 C2 4 9 0.5 16 0.5 C21 0.5 25 3 28 6 L27 7.5 L30 11 C28 15 25 16 22 19 C19 21.5 16 22 13 22 C8 21 5 17 2 13 Z" fill="#000"/><path d="M5 8.5 C5.5 6.5 8 6.5 9.5 7 L20.5 7 C22 6 24.5 6.5 24 9 C23 14 19 18 14.5 18 C10 18 6 14 5 8.5Z" fill="#fff"/><path d="M9.5 3 H21 L20.5 9 C20 13.5 18 15.5 15.5 15.5 C12.5 15.5 10.5 13 10 9.5Z" fill="#000"/><ellipse cx="13.6" cy="9.2" rx="1.1" ry="2.3" fill="#fff"/></svg>
<svg class="a" style="left:2193px;top:490px;" width="20" height="27" viewBox="0 0 20 27"><path d="M3 13 V8.7 A7 7 0 0 1 17 8.7 V13" fill="none" stroke="#b4b4b4" stroke-width="2.2"/><rect x="0.5" y="13" width="19" height="14" fill="#b4b4b4"/></svg>
<div class="a" style="left:1723px;top:536px;width:32px;height:18px;background:#ffff00;border:2px solid #000"></div>
<div class="t" style="left:1766.24px;top:532px;font-size:24px;line-height:28px;transform:scaleX(0.878);transform-origin:0 0;">EASEMENT</div>
<svg class="a" style="left:2144px;top:532.7px;" width="30" height="23" viewBox="0 0 30 23"><path d="M0.5 11 C2 4 9 0.5 16 0.5 C21 0.5 25 3 28 6 L27 7.5 L30 11 C28 15 25 16 22 19 C19 21.5 16 22 13 22 C8 21 5 17 2 13 Z" fill="#000"/><path d="M5 8.5 C5.5 6.5 8 6.5 9.5 7 L20.5 7 C22 6 24.5 6.5 24 9 C23 14 19 18 14.5 18 C10 18 6 14 5 8.5Z" fill="#fff"/><path d="M9.5 3 H21 L20.5 9 C20 13.5 18 15.5 15.5 15.5 C12.5 15.5 10.5 13 10 9.5Z" fill="#000"/><ellipse cx="13.6" cy="9.2" rx="1.1" ry="2.3" fill="#fff"/></svg>
<svg class="a" style="left:2193px;top:530px;" width="20" height="27" viewBox="0 0 20 27"><path d="M3 13 V8.7 A7 7 0 0 1 17 8.7 V13" fill="none" stroke="#b4b4b4" stroke-width="2.2"/><rect x="0.5" y="13" width="19" height="14" fill="#b4b4b4"/></svg>
<div class="a" style="left:1723px;top:576px;width:32px;height:18px;background:#ff00ff;border:2px solid #000"></div>
<div class="t" style="left:1766.26px;top:572px;font-size:24px;line-height:28px;transform:scaleX(0.868);transform-origin:0 0;">LOT</div>
<svg class="a" style="left:2144px;top:572.7px;" width="30" height="23" viewBox="0 0 30 23"><path d="M0.5 11 C2 4 9 0.5 16 0.5 C21 0.5 25 3 28 6 L27 7.5 L30 11 C28 15 25 16 22 19 C19 21.5 16 22 13 22 C8 21 5 17 2 13 Z" fill="#000"/><path d="M5 8.5 C5.5 6.5 8 6.5 9.5 7 L20.5 7 C22 6 24.5 6.5 24 9 C23 14 19 18 14.5 18 C10 18 6 14 5 8.5Z" fill="#fff"/><path d="M9.5 3 H21 L20.5 9 C20 13.5 18 15.5 15.5 15.5 C12.5 15.5 10.5 13 10 9.5Z" fill="#000"/><ellipse cx="13.6" cy="9.2" rx="1.1" ry="2.3" fill="#fff"/></svg>
<svg class="a" style="left:2193px;top:570px;" width="20" height="27" viewBox="0 0 20 27"><path d="M3 13 V8.7 A7 7 0 0 1 17 8.7 V13" fill="none" stroke="#b4b4b4" stroke-width="2.2"/><rect x="0.5" y="13" width="19" height="14" fill="#b4b4b4"/></svg>
<div class="a" style="left:1723px;top:616px;width:32px;height:18px;background:#0000ff;border:2px solid #000"></div>
<div class="t" style="left:1766.25px;top:612px;font-size:24px;line-height:28px;transform:scaleX(0.874);transform-origin:0 0;">PL</div>
<svg class="a" style="left:2144px;top:612.7px;" width="30" height="23" viewBox="0 0 30 23"><path d="M0.5 11 C2 4 9 0.5 16 0.5 C21 0.5 25 3 28 6 L27 7.5 L30 11 C28 15 25 16 22 19 C19 21.5 16 22 13 22 C8 21 5 17 2 13 Z" fill="#000"/><path d="M5 8.5 C5.5 6.5 8 6.5 9.5 7 L20.5 7 C22 6 24.5 6.5 24 9 C23 14 19 18 14.5 18 C10 18 6 14 5 8.5Z" fill="#fff"/><path d="M9.5 3 H21 L20.5 9 C20 13.5 18 15.5 15.5 15.5 C12.5 15.5 10.5 13 10 9.5Z" fill="#000"/><ellipse cx="13.6" cy="9.2" rx="1.1" ry="2.3" fill="#fff"/></svg>
<svg class="a" style="left:2193px;top:610px;" width="20" height="27" viewBox="0 0 20 27"><path d="M3 13 V8.7 A7 7 0 0 1 17 8.7 V13" fill="none" stroke="#b4b4b4" stroke-width="2.2"/><rect x="0.5" y="13" width="19" height="14" fill="#b4b4b4"/></svg>
<div class="a" style="left:1723px;top:656px;width:32px;height:18px;background:#00ffff;border:2px solid #000"></div>
<div class="t" style="left:1766.05px;top:652px;font-size:24px;line-height:28px;transform:scaleX(0.976);transform-origin:0 0;">POND</div>
<svg class="a" style="left:2144px;top:652.7px;" width="30" height="23" viewBox="0 0 30 23"><path d="M0.5 11 C2 4 9 0.5 16 0.5 C21 0.5 25 3 28 6 L27 7.5 L30 11 C28 15 25 16 22 19 C19 21.5 16 22 13 22 C8 21 5 17 2 13 Z" fill="#000"/><path d="M5 8.5 C5.5 6.5 8 6.5 9.5 7 L20.5 7 C22 6 24.5 6.5 24 9 C23 14 19 18 14.5 18 C10 18 6 14 5 8.5Z" fill="#fff"/><path d="M9.5 3 H21 L20.5 9 C20 13.5 18 15.5 15.5 15.5 C12.5 15.5 10.5 13 10 9.5Z" fill="#000"/><ellipse cx="13.6" cy="9.2" rx="1.1" ry="2.3" fill="#fff"/></svg>
<svg class="a" style="left:2193px;top:650px;" width="20" height="27" viewBox="0 0 20 27"><path d="M3 13 V8.7 A7 7 0 0 1 17 8.7 V13" fill="none" stroke="#b4b4b4" stroke-width="2.2"/><rect x="0.5" y="13" width="19" height="14" fill="#b4b4b4"/></svg>
<div class="a" style="left:1723px;top:696px;width:32px;height:18px;background:#ff0000;border:2px solid #000"></div>
<div class="t" style="left:1766.15px;top:692px;font-size:24px;line-height:28px;transform:scaleX(0.926);transform-origin:0 0;">ROW</div>
<svg class="a" style="left:2144px;top:692.7px;" width="30" height="23" viewBox="0 0 30 23"><path d="M0.5 11 C2 4 9 0.5 16 0.5 C21 0.5 25 3 28 6 L27 7.5 L30 11 C28 15 25 16 22 19 C19 21.5 16 22 13 22 C8 21 5 17 2 13 Z" fill="#000"/><path d="M5 8.5 C5.5 6.5 8 6.5 9.5 7 L20.5 7 C22 6 24.5 6.5 24 9 C23 14 19 18 14.5 18 C10 18 6 14 5 8.5Z" fill="#fff"/><path d="M9.5 3 H21 L20.5 9 C20 13.5 18 15.5 15.5 15.5 C12.5 15.5 10.5 13 10 9.5Z" fill="#000"/><ellipse cx="13.6" cy="9.2" rx="1.1" ry="2.3" fill="#fff"/></svg>
<svg class="a" style="left:2193px;top:690px;" width="20" height="27" viewBox="0 0 20 27"><path d="M3 13 V8.7 A7 7 0 0 1 17 8.7 V13" fill="none" stroke="#b4b4b4" stroke-width="2.2"/><rect x="0.5" y="13" width="19" height="14" fill="#b4b4b4"/></svg>
<div class="a" style="left:1723px;top:736px;width:32px;height:18px;background:#00ffff;border:2px solid #000"></div>
<div class="t" style="left:1767.15px;top:732px;font-size:24px;line-height:28px;transform:scaleX(0.845);transform-origin:0 0;">SETBACK</div>
<svg class="a" style="left:2144px;top:732.7px;" width="30" height="23" viewBox="0 0 30 23"><path d="M0.5 11 C2 4 9 0.5 16 0.5 C21 0.5 25 3 28 6 L27 7.5 L30 11 C28 15 25 16 22 19 C19 21.5 16 22 13 22 C8 21 5 17 2 13 Z" fill="#000"/><path d="M5 8.5 C5.5 6.5 8 6.5 9.5 7 L20.5 7 C22 6 24.5 6.5 24 9 C23 14 19 18 14.5 18 C10 18 6 14 5 8.5Z" fill="#fff"/><path d="M9.5 3 H21 L20.5 9 C20 13.5 18 15.5 15.5 15.5 C12.5 15.5 10.5 13 10 9.5Z" fill="#000"/><ellipse cx="13.6" cy="9.2" rx="1.1" ry="2.3" fill="#fff"/></svg>
<svg class="a" style="left:2193px;top:730px;" width="20" height="27" viewBox="0 0 20 27"><path d="M3 13 V8.7 A7 7 0 0 1 17 8.7 V13" fill="none" stroke="#b4b4b4" stroke-width="2.2"/><rect x="0.5" y="13" width="19" height="14" fill="#b4b4b4"/></svg>
<div class="a" style="left:1723px;top:776px;width:32px;height:18px;background:#fff;border:2px solid #000"></div>
<div class="t" style="left:1768.00px;top:772px;font-size:24px;line-height:28px;transform:scaleX(0.972);transform-origin:0 0;">View Port</div>
<svg class="a" style="left:2144px;top:772.7px;" width="30" height="23" viewBox="0 0 30 23"><path d="M0.5 11 C2 4 9 0.5 16 0.5 C21 0.5 25 3 28 6 L27 7.5 L30 11 C28 15 25 16 22 19 C19 21.5 16 22 13 22 C8 21 5 17 2 13 Z" fill="#000"/><path d="M5 8.5 C5.5 6.5 8 6.5 9.5 7 L20.5 7 C22 6 24.5 6.5 24 9 C23 14 19 18 14.5 18 C10 18 6 14 5 8.5Z" fill="#fff"/><path d="M9.5 3 H21 L20.5 9 C20 13.5 18 15.5 15.5 15.5 C12.5 15.5 10.5 13 10 9.5Z" fill="#000"/><ellipse cx="13.6" cy="9.2" rx="1.1" ry="2.3" fill="#fff"/></svg>
<svg class="a" style="left:2193px;top:770px;" width="20" height="27" viewBox="0 0 20 27"><path d="M3 13 V8.7 A7 7 0 0 1 17 8.7 V13" fill="none" stroke="#b4b4b4" stroke-width="2.2"/><rect x="0.5" y="13" width="19" height="14" fill="#b4b4b4"/></svg>
<svg class="a" style="left:2100px;top:570px;" width="30" height="28" viewBox="0 0 30 28"><path d="M3 27 L6 20 L22 3 Q25 1 27 4 Q28 6 26 8 L10 25 Z" fill="#e8a030" stroke="#8a5a10" stroke-width="1"/><path d="M22 3 Q25 1 27 4 Q28 6 26 8 L23.5 5.5Z" fill="#e03030"/><path d="M3 27 L6 20 L10 25Z" fill="#f4d8a0"/></svg>
<div class="a" style="left:2226px;top:233px;width:63px;height:1341px;background:#f0f0f0"></div>
<div class="a" style="left:2226px;top:233px;width:1px;height:1341px;background:#b0b0b0"></div>
<div class="a" style="left:2278px;top:1171px;width:30px;height:420px;background:#f4f4f4;border:2px solid #b8b8b8;border-radius:6px"></div>
<div class="a" style="left:2240px;top:239px;width:2px;height:2px;background:#c8c8c8"></div>
<div class="a" style="left:2242px;top:243px;width:2px;height:2px;background:#c8c8c8"></div>
<div class="a" style="left:2244px;top:239px;width:2px;height:2px;background:#c8c8c8"></div>
<div class="a" style="left:2246px;top:243px;width:2px;height:2px;background:#c8c8c8"></div>
<div class="a" style="left:2248px;top:239px;width:2px;height:2px;background:#c8c8c8"></div>
<div class="a" style="left:2250px;top:243px;width:2px;height:2px;background:#c8c8c8"></div>
<div class="a" style="left:2252px;top:239px;width:2px;height:2px;background:#c8c8c8"></div>
<div class="a" style="left:2254px;top:243px;width:2px;height:2px;background:#c8c8c8"></div>
<div class="a" style="left:2256px;top:239px;width:2px;height:2px;background:#c8c8c8"></div>
<div class="a" style="left:2258px;top:243px;width:2px;height:2px;background:#c8c8c8"></div>
<div class="a" style="left:2260px;top:239px;width:2px;height:2px;background:#c8c8c8"></div>
<div class="a" style="left:2262px;top:243px;width:2px;height:2px;background:#c8c8c8"></div>
<div class="a" style="left:2264px;top:239px;width:2px;height:2px;background:#c8c8c8"></div>
<div class="a" style="left:2266px;top:243px;width:2px;height:2px;background:#c8c8c8"></div>
<div class="a" style="left:2268px;top:239px;width:2px;height:2px;background:#c8c8c8"></div>
<div class="a" style="left:2270px;top:243px;width:2px;height:2px;background:#c8c8c8"></div>
<div class="a" style="left:2272px;top:239px;width:2px;height:2px;background:#c8c8c8"></div>
<div class="a" style="left:2274px;top:243px;width:2px;height:2px;background:#c8c8c8"></div>
<div class="a" style="left:2276px;top:239px;width:2px;height:2px;background:#c8c8c8"></div>
<div class="a" style="left:2278px;top:243px;width:2px;height:2px;background:#c8c8c8"></div>
<div class="a" style="left:2280px;top:239px;width:2px;height:2px;background:#c8c8c8"></div>
<div class="a" style="left:2282px;top:243px;width:2px;height:2px;background:#c8c8c8"></div>
<div class="a" style="left:2231px;top:255px;width:58px;height:57px;background:linear-gradient(#8c8c8c,#d8d8d8 45%,#f2f2f2);border:2px solid #8a8a8a"></div>
<div class="a" style="left:2240px;top:263px;width:42px;height:42px;background:#fff;border:1.5px solid #484848;border-radius:2px"></div>
<div class="a" style="left:2240px;top:263px;width:42px;height:7.5px;background:#000;border-radius:2px 2px 0 0"></div>
<div class="a" style="left:2241.5px;top:264.5px;width:5px;height:5px;background:#fff"></div>
<svg class="a" style="left:2240px;top:263px;" width="42" height="42" viewBox="0 0 42 42"><path d="M10 20 L22 14 L22 32 L10 36Z" fill="#c8c8c8" stroke="#444"/><path d="M16 18 L30 12 L30 30 L16 34Z" fill="#fff" stroke="#444"/><path d="M20 29 L27 17 L27 28Z" fill="none" stroke="#e33" stroke-width="1.5"/></svg>
<div class="a" style="left:2238px;top:319px;width:42px;height:42px;background:#fff;border:1.5px solid #484848;border-radius:2px"></div>
<div class="a" style="left:2238px;top:319px;width:42px;height:7.5px;background:#000;border-radius:2px 2px 0 0"></div>
<div class="a" style="left:2239.5px;top:320.5px;width:5px;height:5px;background:#fff"></div>
<svg class="a" style="left:2238px;top:319px;" width="42" height="42" viewBox="0 0 42 42"><rect x="10" y="15" width="14" height="12" fill="#f8eab0" stroke="#555"/><circle cx="24" cy="26" r="7" fill="#f8eab0" stroke="#555"/></svg>
<div class="a" style="left:2238px;top:378px;width:42px;height:42px;background:#fff;border:1.5px solid #484848;border-radius:2px"></div>
<div class="a" style="left:2238px;top:378px;width:42px;height:7.5px;background:#000;border-radius:2px 2px 0 0"></div>
<div class="a" style="left:2239.5px;top:379.5px;width:5px;height:5px;background:#fff"></div>
<svg class="a" style="left:2238px;top:378px;" width="42" height="42" viewBox="0 0 42 42"><rect x="9" y="17" width="24" height="16" rx="2" fill="#f4f4f4" stroke="#9ab0d8" stroke-width="1.5"/></svg>
<div class="a" style="left:2237px;top:430px;width:44px;height:2px;background:#d0d0d0"></div>
<div class="a" style="left:2238px;top:447px;width:42px;height:42px;background:#fff;border:1.5px solid #484848;border-radius:2px"></div>
<div class="a" style="left:2238px;top:447px;width:42px;height:7.5px;background:#000;border-radius:2px 2px 0 0"></div>
<div class="a" style="left:2239.5px;top:448.5px;width:5px;height:5px;background:#fff"></div>
<svg class="a" style="left:2238px;top:447px;" width="42" height="42" viewBox="0 0 42 42"><rect x="6" y="14" width="6" height="5" fill="#000"/><rect x="6" y="22" width="6" height="5" fill="#000"/><rect x="6" y="30" width="6" height="5" fill="#000"/><rect x="15" y="14" width="20" height="5" fill="none" stroke="#333"/><rect x="15" y="22" width="20" height="5" fill="none" stroke="#333"/><rect x="15" y="30" width="20" height="5" fill="none" stroke="#333"/></svg>
<div class="a" style="left:2238px;top:505px;width:42px;height:42px;background:#fff;border:1.5px solid #484848;border-radius:2px"></div>
<div class="a" style="left:2238px;top:505px;width:42px;height:7.5px;background:#000;border-radius:2px 2px 0 0"></div>
<div class="a" style="left:2239.5px;top:506.5px;width:5px;height:5px;background:#fff"></div>
<svg class="a" style="left:2238px;top:505px;" width="42" height="42" viewBox="0 0 42 42"><path d="M8 15 H34 L23 26 V36 L19 33 V26Z" fill="#888" stroke="#333"/></svg>
<div class="a" style="left:2231px;top:556px;width:58px;height:56px;background:linear-gradient(#8c8c8c,#d8d8d8 45%,#f2f2f2);border:2px solid #8a8a8a"></div>
<div class="a" style="left:2240px;top:565px;width:42px;height:42px;background:#fff;border:1.5px solid #484848;border-radius:2px"></div>
<div class="a" style="left:2240px;top:565px;width:42px;height:7.5px;background:#000;border-radius:2px 2px 0 0"></div>
<div class="a" style="left:2241.5px;top:566.5px;width:5px;height:5px;background:#fff"></div>
<svg class="a" style="left:2240px;top:565px;" width="42" height="42" viewBox="0 0 42 42"><path d="M8 18 L18 21 V31 L8 34Z" fill="#fff" stroke="#333" stroke-width="1.5"/><rect x="18" y="21" width="14" height="10" fill="#ccc" stroke="#333"/><line x1="4" y1="26" x2="38" y2="26" stroke="#e44" stroke-width="1"/></svg>
<div class="a" style="left:2237px;top:616px;width:44px;height:2px;background:#d0d0d0"></div>
<div class="a" style="left:2231px;top:626px;width:58px;height:57px;background:linear-gradient(#8c8c8c,#d8d8d8 45%,#f2f2f2);border:2px solid #8a8a8a"></div>
<div class="a" style="left:2240px;top:635px;width:42px;height:42px;background:#fff;border:1.5px solid #484848;border-radius:2px"></div>
<div class="a" style="left:2240px;top:635px;width:42px;height:7.5px;background:#000;border-radius:2px 2px 0 0"></div>
<div class="a" style="left:2241.5px;top:636.5px;width:5px;height:5px;background:#fff"></div>
<svg class="a" style="left:2240px;top:635px;" width="42" height="42" viewBox="0 0 42 42"><line x1="6" y1="14" x2="26" y2="14" stroke="#666" stroke-width="1"/><line x1="6" y1="19" x2="24" y2="19" stroke="#666" stroke-width="1"/><line x1="6" y1="24" x2="28" y2="24" stroke="#666" stroke-width="1"/><line x1="6" y1="29" x2="30" y2="29" stroke="#666" stroke-width="1"/><line x1="2" y1="34" x2="40" y2="34" stroke="#333" stroke-width="1"/></svg>
<div class="a" style="left:2238px;top:691px;width:42px;height:42px;background:#fff;border:1.5px solid #484848;border-radius:2px"></div>
<div class="a" style="left:2238px;top:691px;width:42px;height:7.5px;background:#000;border-radius:2px 2px 0 0"></div>
<div class="a" style="left:2239.5px;top:692.5px;width:5px;height:5px;background:#fff"></div>
<svg class="a" style="left:2238px;top:691px;" width="42" height="42" viewBox="0 0 42 42"><rect x="12" y="14" width="18" height="22" fill="#c08a3a" stroke="#7a5a20"/><rect x="15" y="17" width="12" height="16" fill="#eee"/><rect x="17" y="12" width="8" height="5" fill="#888"/></svg>
<div class="a" style="left:919px;top:101px;width:2px;height:64px;background:#d0d0d0"></div>
<div class="a" style="left:927px;top:110px;width:2px;height:2px;background:#c8c8c8"></div>
<div class="a" style="left:932px;top:112px;width:2px;height:2px;background:#c8c8c8"></div>
<div class="a" style="left:927px;top:114px;width:2px;height:2px;background:#c8c8c8"></div>
<div class="a" style="left:932px;top:116px;width:2px;height:2px;background:#c8c8c8"></div>
<div class="a" style="left:927px;top:118px;width:2px;height:2px;background:#c8c8c8"></div>
<div class="a" style="left:932px;top:120px;width:2px;height:2px;background:#c8c8c8"></div>
<div class="a" style="left:927px;top:122px;width:2px;height:2px;background:#c8c8c8"></div>
<div class="a" style="left:932px;top:124px;width:2px;height:2px;background:#c8c8c8"></div>
<div class="a" style="left:927px;top:126px;width:2px;height:2px;background:#c8c8c8"></div>
<div class="a" style="left:932px;top:128px;width:2px;height:2px;background:#c8c8c8"></div>
<div class="a" style="left:927px;top:130px;width:2px;height:2px;background:#c8c8c8"></div>
<div class="a" style="left:932px;top:132px;width:2px;height:2px;background:#c8c8c8"></div>
<div class="a" style="left:927px;top:134px;width:2px;height:2px;background:#c8c8c8"></div>
<div class="a" style="left:932px;top:136px;width:2px;height:2px;background:#c8c8c8"></div>
<div class="a" style="left:927px;top:138px;width:2px;height:2px;background:#c8c8c8"></div>
<div class="a" style="left:932px;top:140px;width:2px;height:2px;background:#c8c8c8"></div>
<div class="a" style="left:927px;top:142px;width:2px;height:2px;background:#c8c8c8"></div>
<div class="a" style="left:932px;top:144px;width:2px;height:2px;background:#c8c8c8"></div>
<div class="a" style="left:927px;top:146px;width:2px;height:2px;background:#c8c8c8"></div>
<div class="a" style="left:932px;top:148px;width:2px;height:2px;background:#c8c8c8"></div>
<div class="a" style="left:927px;top:150px;width:2px;height:2px;background:#c8c8c8"></div>
<div class="a" style="left:932px;top:152px;width:2px;height:2px;background:#c8c8c8"></div>
<div class="a" style="left:927px;top:154px;width:2px;height:2px;background:#c8c8c8"></div>
<div class="a" style="left:932px;top:156px;width:2px;height:2px;background:#c8c8c8"></div>
<div class="a" style="left:927px;top:158px;width:2px;height:2px;background:#c8c8c8"></div>
<div class="a" style="left:932px;top:160px;width:2px;height:2px;background:#c8c8c8"></div>
<svg class="a" style="left:607px;top:114px;" width="48" height="40" viewBox="0 0 48 40"><path d="M20 36 Q2 32 4 18 Q8 4 24 6 Q34 8 38 14 L44 8 L44 26 L28 26 L34 20 Q30 14 22 14 Q12 16 12 22 Q14 32 24 34Z" fill="#a8a8a8" stroke="#888" stroke-width="1"/></svg>
<div class="a" style="left:664px;top:111px;width:2px;height:46px;background:#c4c4c4"></div>
<svg class="a" style="left:683px;top:113px;" width="40" height="42" viewBox="0 0 40 42"><path d="M4 30 L26 4 Q30 1 34 4 L38 8 Q40 12 36 16 L14 40 L6 38Z" fill="#bdbdbd" stroke="#777" stroke-width="1.5"/><path d="M4 30 L14 40 L6 40 L2 34Z" fill="#fff" stroke="#777"/><path d="M10 40 H36" stroke="#d8d8d8" stroke-width="2"/></svg>
<div class="a" style="left:734px;top:111px;width:2px;height:46px;background:#c4c4c4"></div>
<svg class="a" style="left:749px;top:111px;" width="44" height="46" viewBox="0 0 44 46"><ellipse cx="11" cy="25" rx="7" ry="5" fill="none" stroke="#999" stroke-width="3"/><ellipse cx="23" cy="38" rx="4" ry="7" fill="none" stroke="#999" stroke-width="3"/><path d="M20 32 L25 4 L28 5 L24 30Z" fill="#eee" stroke="#999"/><path d="M16 26 L42 12 L42 18 L18 30Z" fill="#eee" stroke="#999"/><path d="M3 42 H11 M7 38 V46" stroke="#444" stroke-width="2"/></svg>
<svg class="a" style="left:806px;top:110px;" width="46" height="48" viewBox="0 0 46 48"><rect x="2" y="2" width="28" height="34" fill="#f4f4f4" stroke="#ccc"/><path d="M14 12 H40 L44 16 V46 H14Z" fill="#fafafa" stroke="#bbb" stroke-width="1.5"/><path d="M19 20 H38 M19 25 H38 M19 30 H38 M19 35 H36" stroke="#ccc" stroke-width="1.5"/><path d="M2 40 H10 M6 36 V44" stroke="#444" stroke-width="2"/></svg>
<svg class="a" style="left:866px;top:110px;" width="42" height="48" viewBox="0 0 42 48"><rect x="2" y="6" width="38" height="40" rx="2" fill="#c08a30" stroke="#9a6a20" stroke-width="1.5"/><rect x="6" y="10" width="30" height="33" fill="#f4f4f4"/><rect x="13" y="2" width="16" height="9" rx="2" fill="#999" stroke="#666"/><path d="M10 17 H32 M10 22 H32 M10 27 H32 M10 32 H28" stroke="#bbb" stroke-width="1.5"/><path d="M26 43 L36 33 V43Z" fill="#888"/></svg>
<svg class="a" style="left:952px;top:115px;" width="36" height="42" viewBox="0 0 36 42"><path d="M4 32 L8 24 L26 5 Q30 2 33 5 Q36 9 33 12 L14 31Z" fill="#e03020" stroke="#902010" stroke-width="1"/><path d="M4 32 L8 24 L14 31Z" fill="#f0d0a0"/><path d="M0 38 H34" stroke="#e00" stroke-width="2"/></svg>
<div class="a" style="left:1005px;top:118px;width:44px;height:33px;background:#000080;border:2px solid #000"></div>
<svg class="a" style="left:1009px;top:122px;" width="36" height="25" viewBox="0 0 36 25"><path d="M4 20 L30 5 V20Z" fill="none" stroke="#fff" stroke-width="2" stroke-dasharray="5 3"/></svg>
<svg class="a" style="left:1062px;top:112px;" width="46" height="44" viewBox="0 0 46 44"><circle cx="22" cy="22" r="19" fill="none" stroke="#000" stroke-width="3" stroke-dasharray="40 4"/><path d="M1 43 L42 2" stroke="#0000ff" stroke-width="2"/></svg>
<div class="a" style="left:1117px;top:111px;width:2px;height:46px;background:#c4c4c4"></div>
<div class="a" style="left:1127px;top:106px;width:58px;height:58px;background:linear-gradient(#8c8c8c,#d8d8d8 45%,#f2f2f2);border:2px solid #8a8a8a"></div>
<svg class="a" style="left:1137px;top:115px;" width="40" height="40" viewBox="0 0 40 40"><circle cx="4" cy="4" r="2" fill="#000"/><circle cx="4" cy="16" r="2" fill="#000"/><circle cx="4" cy="28" r="2" fill="#000"/><circle cx="4" cy="40" r="2" fill="#000"/><circle cx="16" cy="4" r="2" fill="#000"/><circle cx="16" cy="16" r="2" fill="#000"/><circle cx="16" cy="28" r="2" fill="#000"/><circle cx="16" cy="40" r="2" fill="#000"/><circle cx="28" cy="4" r="2" fill="#000"/><circle cx="28" cy="16" r="2" fill="#000"/><circle cx="28" cy="28" r="2" fill="#000"/><circle cx="28" cy="40" r="2" fill="#000"/><circle cx="40" cy="4" r="2" fill="#000"/><circle cx="40" cy="16" r="2" fill="#000"/><circle cx="40" cy="28" r="2" fill="#000"/><circle cx="40" cy="40" r="2" fill="#000"/></svg>
<div class="a" style="left:1188px;top:111px;width:2px;height:46px;background:#c4c4c4"></div>
<svg class="a" style="left:1201px;top:110px;" width="46" height="46" viewBox="0 0 46 46"><ellipse cx="24" cy="39" rx="18" ry="3.5" fill="#000" opacity="0.07"/><path d="M31.5 31 L42 41.5" stroke="#5c5c5c" stroke-width="6.5" stroke-linecap="round"/><path d="M32 31 L41 40" stroke="#aaa" stroke-width="1.5" opacity="0.6"/><circle cx="18" cy="18" r="16.5" fill="#f2f2ec" stroke="#b8b8b0" stroke-width="1.2"/><circle cx="18" cy="18" r="14" fill="url(#lensblue)" stroke="#9aa" stroke-width="0.6"/><path d="M15.5 8 H20.5 V15.5 H28 V20.5 H20.5 V28 H15.5 V20.5 H8 V15.5 H15.5Z" fill="#fff" stroke="#2a5aa8" stroke-width="1"/></svg>
<svg class="a" style="left:1259px;top:110px;" width="46" height="46" viewBox="0 0 46 46"><ellipse cx="24" cy="39" rx="18" ry="3.5" fill="#000" opacity="0.07"/><path d="M31.5 31 L42 41.5" stroke="#5c5c5c" stroke-width="6.5" stroke-linecap="round"/><path d="M32 31 L41 40" stroke="#aaa" stroke-width="1.5" opacity="0.6"/><circle cx="18" cy="18" r="16.5" fill="#f2f2ec" stroke="#b8b8b0" stroke-width="1.2"/><circle cx="18" cy="18" r="14" fill="url(#lensblue)" stroke="#9aa" stroke-width="0.6"/><rect x="8" y="15.5" width="20" height="5" fill="#fff" stroke="#2a5aa8" stroke-width="1"/></svg>
<svg class="a" style="left:1317px;top:110px;" width="46" height="46" viewBox="0 0 46 46"><ellipse cx="24" cy="39" rx="18" ry="3.5" fill="#000" opacity="0.07"/><path d="M31.5 31 L42 41.5" stroke="#5c5c5c" stroke-width="6.5" stroke-linecap="round"/><path d="M32 31 L41 40" stroke="#aaa" stroke-width="1.5" opacity="0.6"/><circle cx="18" cy="18" r="16.5" fill="#f2f2ec" stroke="#b8b8b0" stroke-width="1.2"/><circle cx="18" cy="18" r="14" fill="url(#lensblue)" stroke="#9aa" stroke-width="0.6"/><path d="M8.5 15 V8.5 H15 V11.5 H11.5 V15Z M21 8.5 H27.5 V15 H24.5 V11.5 H21Z M27.5 21 V27.5 H21 V24.5 H24.5 V21Z M15 27.5 H8.5 V21 H11.5 V24.5 H15Z" fill="#fff" stroke="#2a5aa8" stroke-width="1"/></svg>
<svg class="a" style="left:1375px;top:110px;" width="46" height="46" viewBox="0 0 46 46"><ellipse cx="24" cy="39" rx="18" ry="3.5" fill="#000" opacity="0.07"/><path d="M31.5 31 L42 41.5" stroke="#5c5c5c" stroke-width="6.5" stroke-linecap="round"/><path d="M32 31 L41 40" stroke="#aaa" stroke-width="1.5" opacity="0.6"/><circle cx="18" cy="18" r="16.5" fill="#f2f2ec" stroke="#b8b8b0" stroke-width="1.2"/><circle cx="18" cy="18" r="14" fill="url(#lensgray)" stroke="#9aa" stroke-width="0.6"/><path d="M8.5 15 V8.5 H15 V11.5 H11.5 V15Z M21 8.5 H27.5 V15 H24.5 V11.5 H21Z M27.5 21 V27.5 H21 V24.5 H24.5 V21Z M15 27.5 H8.5 V21 H11.5 V24.5 H15Z" fill="#9a9a9a"/><rect x="13" y="13" width="10" height="10" fill="#9a9a9a"/></svg>
<svg class="a" style="left:1433px;top:110px;" width="46" height="46" viewBox="0 0 46 46"><ellipse cx="24" cy="39" rx="18" ry="3.5" fill="#000" opacity="0.07"/><path d="M31.5 31 L42 41.5" stroke="#5c5c5c" stroke-width="6.5" stroke-linecap="round"/><path d="M32 31 L41 40" stroke="#aaa" stroke-width="1.5" opacity="0.6"/><circle cx="18" cy="18" r="16.5" fill="#f2f2ec" stroke="#b8b8b0" stroke-width="1.2"/><circle cx="18" cy="18" r="14" fill="url(#lensblue)" stroke="#9aa" stroke-width="0.6"/><path d="M6.5 18 L15 9.5 V14.5 H28 V21.5 H15 V26.5Z" fill="#fff" stroke="#2a5aa8" stroke-width="1"/></svg>
<svg class="a" style="left:1491px;top:110px;" width="46" height="46" viewBox="0 0 46 46"><ellipse cx="26" cy="40" rx="14" ry="3" fill="#000" opacity="0.07"/><rect x="1.5" y="1.5" width="41" height="25" fill="#fff" stroke="#4a7ad8" stroke-width="1.5"/><path d="M33 33 L41 41" stroke="#5c5c5c" stroke-width="6" stroke-linecap="round"/><circle cx="22" cy="24" r="14" fill="#f2f2ec" stroke="#b8b8b0" stroke-width="1.2"/><circle cx="22" cy="24" r="11.5" fill="url(#lensblue)"/></svg>
<svg class="a" style="left:1549px;top:110px;" width="46" height="46" viewBox="0 0 46 46"><ellipse cx="24" cy="39" rx="18" ry="3.5" fill="#000" opacity="0.07"/><path d="M31.5 31 L42 41.5" stroke="#5c5c5c" stroke-width="6.5" stroke-linecap="round"/><circle cx="18" cy="18" r="16" fill="#f2f2ec" stroke="#b8b8b0" stroke-width="1.2"/><circle cx="18" cy="18" r="13.5" fill="url(#lensblue)"/><path d="M18 -1 L24 6.5 H20.5 V15.5 H29.5 V12 L37 18 L29.5 24 V20.5 H20.5 V29.5 H24 L18 37 L12 29.5 H15.5 V20.5 H6.5 V24 L-1 18 L6.5 12 V15.5 H15.5 V6.5 H12Z" fill="#fff" stroke="#3a72d0" stroke-width="1"/></svg>
<div class="a" style="left:594px;top:183px;width:25px;height:37px;background:#fff;border:1px solid #e0e0e0;border-left:none"></div>
<svg class="a" style="left:598px;top:196px;" width="14" height="10" viewBox="0 0 14 10"><path d="M1 2 L7 8 L13 2" fill="none" stroke="#333" stroke-width="1.5"/></svg>
<svg class="a" style="left:630px;top:181px;" width="40" height="40" viewBox="0 0 40 40"><rect x="1" y="4" width="24" height="28" fill="#f0f0f0" stroke="#555" stroke-width="1.5"/><circle cx="4" cy="13" r="1" fill="#555"/><circle cx="4" cy="22" r="1" fill="#555"/><path d="M12 36 Q8 30 8 26 Q8 22 12 24 L14 26 V14 Q14 11 17 11 Q19 11 19 14 V22 V12 Q19 9 22 9 Q25 9 25 12 V22 V14 Q25 11 28 11 Q31 11 31 14 V24 V18 Q31 16 33 16 Q36 16 36 19 V28 Q36 34 32 38Z" fill="#fff" stroke="#444" stroke-width="1.5"/></svg>
<div class="a" style="left:689px;top:179px;width:36px;height:42px;background:linear-gradient(#e0e0e0,#fafafa);border:1.6px solid #505050;border-radius:2.5px"></div>
<div class="a" style="left:696px;top:186px;width:23px;height:27px;border:2px solid #f00"></div>
<div class="a" style="left:747px;top:179px;width:36px;height:42px;background:#f0a8a8;border:1px solid #c88"></div>
<div class="a" style="left:765px;top:180px;width:1px;height:40px;background:#c88"></div>
<div class="a" style="left:748px;top:200px;width:34px;height:1px;background:#c88"></div>
<div class="a" style="left:753px;top:186px;width:24px;height:27px;border:2px solid #00f"></div>
<div class="a" style="left:805px;top:179px;width:36px;height:42px;background:linear-gradient(#e0e0e0,#fafafa);border:1.6px solid #505050;border-radius:2.5px"></div>
<div class="a" style="left:816px;top:191px;width:14px;height:18px;border:2px solid #00f"></div>
<svg class="a" style="left:805px;top:179px;" width="36" height="42" viewBox="0 0 36 42"><path d="M18 10 L14 5 H22Z M18 32 L14 37 H22Z M6 21 L2 17 V25Z M30 21 L34 17 V25Z" fill="#f00"/></svg>
<div class="a" style="left:856px;top:177px;width:2px;height:45px;background:#c4c4c4"></div>
<div class="a" style="left:878px;top:180px;width:30px;height:41px;background:linear-gradient(#e0e0e0,#fafafa);border:1.6px solid #505050;border-radius:2.5px"></div>
<div class="a" style="left:882px;top:203px;width:2px;height:2px;background:#333"></div>
<div class="a" style="left:882px;top:190px;width:2px;height:2px;background:#333"></div>
<div class="a" style="left:923px;top:172px;width:58px;height:57px;background:linear-gradient(#8c8c8c,#d8d8d8 45%,#f2f2f2);border:2px solid #8a8a8a"></div>
<div class="a" style="left:933px;top:187px;width:40px;height:30px;background:linear-gradient(#e8e8e8,#fafafa);border:1.6px solid #505050;border-radius:2.5px"></div>
<div class="a" style="left:986px;top:177px;width:2px;height:45px;background:#c4c4c4"></div>
<div class="a" style="left:1003px;top:181px;width:34px;height:40px;background:linear-gradient(#e0e0e0,#fafafa);border:1.6px solid #505050;border-radius:2.5px"></div>
<div class="t" style="left:1012px;top:185px;font-size:30px;line-height:32px;">1</div>
<svg class="a" style="left:1062px;top:180px;" width="34" height="40" viewBox="0 0 34 40"><rect x="0.75" y="0.75" width="32.5" height="38.5" rx="1" fill="#f6f6f6" stroke="#555" stroke-width="1.5"/><line x1="11.6" y1="0.75" x2="11.6" y2="39.25" stroke="#555" stroke-width="1.5"/><line x1="22.4" y1="0.75" x2="22.4" y2="39.25" stroke="#555" stroke-width="1.5"/><line x1="0.75" y1="13.6" x2="33.25" y2="13.6" stroke="#555" stroke-width="1.5"/><line x1="0.75" y1="26.4" x2="33.25" y2="26.4" stroke="#555" stroke-width="1.5"/></svg>
<svg class="a" style="left:1115px;top:179px;" width="46" height="46" viewBox="0 0 46 46"><rect x="1" y="1" width="41.5" height="25.5" rx="1" fill="#f4f4f4" stroke="#555" stroke-width="1.5"/><line x1="21.5" y1="1" x2="21.5" y2="26.5" stroke="#555" stroke-width="1.5"/><ellipse cx="27" cy="39" rx="10" ry="3" fill="#000" opacity="0.08"/><path d="M32 32 L40 40" stroke="#5c5c5c" stroke-width="5" stroke-linecap="round"/><circle cx="21" cy="22" r="12.5" fill="#f2f2ec" stroke="#b8b8b0" stroke-width="1"/><circle cx="21" cy="22" r="10.5" fill="url(#lensblue)"/></svg>
<div class="a" style="left:1171px;top:177px;width:2px;height:45px;background:#c4c4c4"></div>
<div class="a" style="left:1179px;top:172px;width:58px;height:57px;background:linear-gradient(#8c8c8c,#d8d8d8 45%,#f2f2f2);border:2px solid #8a8a8a"></div>
<div class="a" style="left:1189px;top:190px;width:40px;height:22px;background:linear-gradient(90deg,#f00,#ff0 20%,#0f0 40%,#0ff 55%,#00f 72%,#f0f 88%,#f04);border:2px solid #000"></div>
<div class="a" style="left:1245px;top:189px;width:41px;height:22px;background:linear-gradient(90deg,#fff,#000);border:2px solid #000"></div>
<div class="a" style="left:1303px;top:189px;width:41px;height:22px;background:linear-gradient(90deg,#000 50%,#fff 50%);border:2px solid #000"></div>
<div class="a" style="left:1356px;top:177px;width:2px;height:45px;background:#c4c4c4"></div>
<svg class="a" style="left:1372px;top:190px;" width="42" height="20" viewBox="0 0 42 20"><line x1="1" y1="10" x2="41" y2="10" stroke="#000" stroke-width="2"/><path d="M12 1 H30 L21 10 L30 19 H12 L21 10Z" fill="#000"/></svg>
<div class="a" style="left:1426px;top:177px;width:2px;height:45px;background:#c4c4c4"></div>
<div class="a" style="left:1435px;top:172px;width:58px;height:57px;background:linear-gradient(#8c8c8c,#d8d8d8 45%,#f2f2f2);border:2px solid #8a8a8a"></div>
<svg class="a" style="left:1443px;top:179px;" width="42" height="44" viewBox="0 0 42 44"><defs><linearGradient id="vpg" x1="0" y1="0" x2="1" y2="1"><stop offset="0" stop-color="#d4d4d4"/><stop offset="1" stop-color="#fafafa"/></linearGradient></defs><path d="M4.5 4.5 H37 V41.5 H4.5Z" fill="url(#vpg)" stroke="none"/><path d="M4.5 41.5 V4.5 H34" fill="none" stroke="#444" stroke-width="1.6"/><path d="M4.5 41.5 L34 4.5" fill="none" stroke="#444" stroke-width="1.6"/><path d="M37.5 5 V41.5 H8" fill="none" stroke="#555" stroke-width="1.6" stroke-dasharray="6 4"/><path d="M8.5 41.5 L37 6" fill="none" stroke="#666" stroke-width="1.4" stroke-dasharray="7 3"/><circle cx="7" cy="12.8" r="1.3" fill="#444"/><circle cx="7" cy="25" r="1.3" fill="#444"/></svg>
<svg class="a" style="left:1500px;top:179px;" width="42" height="42" viewBox="0 0 42 42"><line x1="21" y1="0.5" x2="21" y2="41" stroke="#5858ff" stroke-width="2"/><line x1="0.5" y1="21" x2="41" y2="21" stroke="#5858ff" stroke-width="2"/><rect x="9" y="18" width="24" height="6" fill="#000080"/><rect x="18" y="9" width="6" height="23" fill="#000080"/></svg>
<div class="a" style="left:1554px;top:177px;width:2px;height:45px;background:#c4c4c4"></div>
<div class="a" style="left:1573px;top:178px;width:36px;height:42px;background:linear-gradient(#e0e0e0,#fafafa);border:1.6px solid #505050;border-radius:2.5px"></div>
<svg class="a" style="left:1575px;top:182px;" width="34" height="36" viewBox="0 0 34 36"><path d="M12 11 L24 24" stroke="#666" stroke-width="6.5" stroke-linecap="round"/><path d="M12 11 L24 24" stroke="#c4c4c4" stroke-width="4" stroke-linecap="round"/><path d="M5 7 A6 6 0 1 0 14 14 L11 10 L9 12 L7 10 L9 8Z" fill="#d8d8d8" stroke="#666" stroke-width="1.2"/><path d="M7 27 L21 13" stroke="#1f4f98" stroke-width="6" stroke-linecap="round"/><path d="M7.5 26.5 L20.5 13.5" stroke="#4a84cc" stroke-width="3"/><path d="M18 9 L24 3 Q30 4 34 12 L31 14 L27 11 L22 15Z" fill="#2e2e2e"/></svg>
<div class="a" style="left:1624px;top:177px;width:2px;height:45px;background:#c4c4c4"></div>
<div class="a" style="left:11px;top:100px;width:584px;height:1001px;background:#f8f8f8;border:1px solid #dcdcdc;border-right:1px solid #8a8a8a;border-bottom:1px solid #8a8a8a;box-shadow:1px 1px 3px rgba(0,0,0,0.35)"></div>
<div class="a" style="left:18px;top:106px;width:42px;height:988px;background:#eeeeee"></div>
<div class="a" style="left:64px;top:106px;width:524px;height:988px;background:#f0f0f0"></div>
<div class="a" style="left:64px;top:420px;width:522px;height:1px;background:#d5d5d5"></div>
<div class="a" style="left:64px;top:421px;width:522px;height:1px;background:#f6f6f6"></div>
<div class="a" style="left:64px;top:570px;width:522px;height:1px;background:#d5d5d5"></div>
<div class="a" style="left:64px;top:571px;width:522px;height:1px;background:#f6f6f6"></div>
<div class="a" style="left:64px;top:632px;width:522px;height:1px;background:#d5d5d5"></div>
<div class="a" style="left:64px;top:633px;width:522px;height:1px;background:#f6f6f6"></div>
<div class="a" style="left:64px;top:782px;width:522px;height:1px;background:#d5d5d5"></div>
<div class="a" style="left:64px;top:783px;width:522px;height:1px;background:#f6f6f6"></div>
<div class="a" style="left:64px;top:844px;width:522px;height:1px;background:#d5d5d5"></div>
<div class="a" style="left:64px;top:845px;width:522px;height:1px;background:#f6f6f6"></div>
<div class="a" style="left:64px;top:1038px;width:522px;height:1px;background:#d5d5d5"></div>
<div class="a" style="left:64px;top:1039px;width:522px;height:1px;background:#f6f6f6"></div>
<div class="a" style="left:18px;top:795px;width:568px;height:43px;background:#91c9f7"></div>
<div class="t" style="left:70.80px;top:115.5px;font-size:24px;line-height:28px;transform:scaleX(1.002);transform-origin:0 0;">New</div>
<div class="t" style="left:379.65px;top:115.5px;font-size:24px;line-height:28px;transform:scaleX(1.047);transform-origin:0 0;">Ctrl+N</div>
<svg class="a" style="left:23px;top:114px;" width="30" height="30" viewBox="0 0 30 30"><rect x="2.5" y="-1.5" width="25" height="28" rx="1.5" fill="#f3f3f3" stroke="#a4a4a4" stroke-width="1.2"/><path d="M3 26.8 H27" stroke="#8a8a8a" stroke-width="1.5"/><circle cx="5" cy="8" r="0.6" fill="#999"/><circle cx="5" cy="15" r="0.6" fill="#999"/><circle cx="22" cy="2" r="5.5" fill="#f0ec30" opacity="0.75"/><circle cx="22" cy="2" r="3" fill="#fafad0"/></svg>
<div class="t" style="left:70.81px;top:159.5px;font-size:24px;line-height:28px;transform:scaleX(0.997);transform-origin:0 0;">New from Template...</div>
<div class="t" style="left:379.65px;top:159.5px;font-size:24px;line-height:28px;transform:scaleX(1.045);transform-origin:0 0;">Ctrl+Shift+N</div>
<svg class="a" style="left:23px;top:158px;" width="30" height="30" viewBox="0 0 30 30"><rect x="2.5" y="-1.5" width="25" height="28" rx="1.5" fill="#f3f3f3" stroke="#a4a4a4" stroke-width="1.2"/><path d="M3 26.8 H27" stroke="#8a8a8a" stroke-width="1.5"/><circle cx="5" cy="8" r="0.6" fill="#999"/><circle cx="5" cy="15" r="0.6" fill="#999"/><circle cx="22" cy="2" r="5.5" fill="#f0ec30" opacity="0.75"/><path d="M5 24 L7 17 L21 3 Q23 2 24 4 Q25 5 24 6.5 L10 21Z" fill="#f4a020" stroke="#b04010" stroke-width="1"/><path d="M5 24 L7 17 L10 21Z" fill="#fff" stroke="#b04010" stroke-width="0.8"/></svg>
<div class="t" style="left:71.80px;top:203.5px;font-size:24px;line-height:28px;transform:scaleX(1.004);transform-origin:0 0;">Open</div>
<div class="t" style="left:379.67px;top:203.5px;font-size:24px;line-height:28px;transform:scaleX(1.029);transform-origin:0 0;">Ctrl+O</div>
<svg class="a" style="left:23px;top:202px;" width="30" height="30" viewBox="0 0 30 30"><path d="M3 10 L5 3 H12 L13 5 H26 L25 14 H3Z" fill="#8c8c8c" stroke="#666" stroke-width="0.8"/><path d="M7 2 H28 L27 14 H6Z" fill="#f4f4f4" stroke="#aaa" stroke-width="0.8"/><path d="M6 12 H31 L27 26 H2 Z" fill="#5f90d4" stroke="#3d6cb4" stroke-width="1"/><path d="M6.5 13 H30 L29.3 15 H6Z" fill="#8ab2e6"/></svg>
<div class="t" style="left:71.84px;top:247.5px;font-size:24px;line-height:28px;transform:scaleX(0.962);transform-origin:0 0;">Open Recent</div>
<div class="t" style="left:70.68px;top:291.5px;font-size:24px;line-height:28px;transform:scaleX(1.059);transform-origin:0 0;">Import</div>
<div class="t" style="left:379.65px;top:291.5px;font-size:24px;line-height:28px;transform:scaleX(1.05);transform-origin:0 0;">Ctrl+Shift+I</div>
<svg class="a" style="left:23px;top:290px;" width="30" height="30" viewBox="0 0 30 30"><path d="M3 10 L5 3 H12 L13 5 H26 L25 14 H3Z" fill="#8c8c8c" stroke="#666" stroke-width="0.8"/><path d="M7 2 H28 L27 14 H6Z" fill="#f4f4f4" stroke="#aaa" stroke-width="0.8"/><path d="M6 12 H31 L27 26 H2 Z" fill="#5f90d4" stroke="#3d6cb4" stroke-width="1"/><path d="M6.5 13 H30 L29.3 15 H6Z" fill="#8ab2e6"/><path d="M14 7 L21 0 V4 H28 V10 H21 V14Z" fill="#40d040" stroke="#107010"/></svg>
<div class="t" style="left:70.91px;top:335.5px;font-size:24px;line-height:28px;transform:scaleX(0.945);transform-origin:0 0;">Revert</div>
<svg class="a" style="left:23px;top:334px;" width="30" height="30" viewBox="0 0 30 30"><g transform="translate(0,-1) scale(0.75)"><path d="M3 10 L5 3 H12 L13 5 H26 L25 14 H3Z" fill="#8c8c8c" stroke="#666" stroke-width="0.8"/><path d="M7 2 H28 L27 14 H6Z" fill="#f4f4f4" stroke="#aaa" stroke-width="0.8"/><path d="M6 12 H31 L27 26 H2 Z" fill="#5f90d4" stroke="#3d6cb4" stroke-width="1"/><path d="M6.5 13 H30 L29.3 15 H6Z" fill="#8ab2e6"/></g><path d="M13 17 Q20 11 25.5 16.5 Q29 22 23 27" fill="none" stroke="#e00000" stroke-width="3.6"/><path d="M9.5 13.5 L17.5 14 L12.5 21Z" fill="#e00000"/></svg>
<div class="t" style="left:71.83px;top:379.5px;font-size:24px;line-height:28px;transform:scaleX(0.974);transform-origin:0 0;">Show in Explorer</div>
<div class="t" style="left:378.85px;top:379.5px;font-size:24px;line-height:28px;transform:scaleX(0.924);transform-origin:0 0;">FI</div>
<div class="t" style="left:71.89px;top:441.5px;font-size:24px;line-height:28px;transform:scaleX(0.906);transform-origin:0 0;">Save</div>
<div class="t" style="left:379.71px;top:441.5px;font-size:24px;line-height:28px;transform:scaleX(0.989);transform-origin:0 0;">Ctrl+S</div>
<svg class="a" style="left:23px;top:440px;" width="30" height="30" viewBox="0 0 30 30"><rect x="3" y="3" width="24" height="24" rx="3" fill="#4a86e8" stroke="#2a50c0" stroke-width="1.2"/><rect x="7" y="4" width="16" height="11" fill="#f4f8ff"/><rect x="8" y="18" width="14" height="9" fill="#e4ecf8" stroke="#5a7ac8" stroke-width="0.8"/><rect x="10" y="20" width="3" height="5" fill="#2a50c0"/></svg>
<div class="t" style="left:71.89px;top:485.5px;font-size:24px;line-height:28px;transform:scaleX(0.91);transform-origin:0 0;">Save As...</div>
<div class="t" style="left:379.69px;top:485.5px;font-size:24px;line-height:28px;transform:scaleX(1.005);transform-origin:0 0;">Ctrl+Shift+S</div>
<svg class="a" style="left:23px;top:484px;" width="30" height="30" viewBox="0 0 30 30"><rect x="3" y="3" width="24" height="24" rx="3" fill="#3a78e0" stroke="#2050b0"/><rect x="7" y="4" width="16" height="10" fill="#fff"/><rect x="9" y="18" width="12" height="9" fill="#e8e8e8"/><path d="M12 20 L14 14 L26 1 L29 4 L17 17Z" fill="#f0a020" stroke="#a05a10"/></svg>
<div class="t" style="left:71.85px;top:529.5px;font-size:24px;line-height:28px;transform:scaleX(0.953);transform-origin:0 0;">Close</div>
<div class="t" style="left:379.71px;top:529.5px;font-size:24px;line-height:28px;transform:scaleX(0.988);transform-origin:0 0;">Ctrl+F4</div>
<svg class="a" style="left:23px;top:528px;" width="30" height="30" viewBox="0 0 30 30"><rect x="6" y="5" width="20" height="20" rx="2" fill="#e8704f" stroke="#c84a30" stroke-width="1.5"/><path d="M11 10 L21 20 M21 10 L11 20" stroke="#fff" stroke-width="3"/></svg>
<div class="t" style="left:70.85px;top:591.5px;font-size:24px;line-height:28px;transform:scaleX(0.977);transform-origin:0 0;">Bitmap Export...</div>
<div class="t" style="left:379.83px;top:591.5px;font-size:24px;line-height:28px;transform:scaleX(0.867);transform-origin:0 0;">XB</div>
<svg class="a" style="left:23px;top:590px;" width="30" height="30" viewBox="0 0 30 30"><text x="5" y="26" font-family="Liberation Serif" font-size="31" fill="#000" stroke="#000" stroke-width="0.8">B</text></svg>
<div class="t" style="left:71.85px;top:653.5px;font-size:24px;line-height:28px;transform:scaleX(0.947);transform-origin:0 0;">Quick SVG Export</div>
<div class="t" style="left:379.84px;top:653.5px;font-size:24px;line-height:28px;transform:scaleX(0.857);transform-origin:0 0;">XS</div>
<svg class="a" style="left:23px;top:652px;" width="30" height="30" viewBox="0 0 30 30"><path d="M4 14 Q4 4 10 8 Q12 1 16 6 Q20 1 22 8 Q28 4 27 14Z" fill="#f0a020" stroke="#000"/><rect x="3" y="13" width="24" height="14" rx="3" fill="#000"/><text x="5" y="25" font-family="Liberation Sans" font-weight="bold" font-size="11" fill="#fff">SVG</text></svg>
<div class="t" style="left:72.80px;top:697.5px;font-size:24px;line-height:28px;transform:scaleX(0.942);transform-origin:0 0;">Advanced SVG Export...</div>
<svg class="a" style="left:23px;top:696px;" width="30" height="30" viewBox="0 0 30 30"><path d="M4 14 Q4 4 10 8 Q12 1 16 6 Q20 1 22 8 Q28 4 27 14Z" fill="#f0a020" stroke="#000"/><rect x="3" y="13" width="24" height="14" rx="3" fill="#000"/><text x="5" y="25" font-family="Liberation Sans" font-weight="bold" font-size="11" fill="#fff">SVG</text><path d="M12 18 L14 12 L24 2 L27 5 L17 15Z" fill="#f0a020" stroke="#a05a10"/></svg>
<div class="t" style="left:71.84px;top:741.5px;font-size:24px;line-height:28px;transform:scaleX(0.956);transform-origin:0 0;">SVG Import...</div>
<svg class="a" style="left:23px;top:740px;" width="30" height="30" viewBox="0 0 30 30"><path d="M3 16 Q3 8 8 11 Q10 5 13 9 Q16 5 18 11 Q23 8 22 16Z" fill="#f0a020" stroke="#000"/><rect x="2" y="15" width="21" height="13" rx="3" fill="#000"/><text x="3" y="26" font-family="Liberation Sans" font-weight="bold" font-size="10" fill="#fff">SVG</text><path d="M15 8 L22 1 V5 H29 V11 H22 V15Z" fill="#40d040" stroke="#107010"/></svg>
<div class="t" style="left:70.91px;top:803.5px;font-size:24px;line-height:28px;transform:scaleX(0.945);transform-origin:0 0;">PDF Export</div>
<div class="t" style="left:379.75px;top:803.5px;font-size:24px;line-height:28px;transform:scaleX(0.948);transform-origin:0 0;">XD</div>
<svg class="a" style="left:23px;top:802px;" width="30" height="30" viewBox="0 0 30 30"><path d="M8 1 H22 L27 6 V29 H8Z" fill="#fafafa" stroke="#ddd"/><rect x="1" y="12" width="24" height="11" fill="#d01818"/><text x="3" y="21.5" font-family="Liberation Sans" font-weight="bold" font-size="9" fill="#fff">PDF</text></svg>
<div class="t" style="left:70.84px;top:865.5px;font-size:24px;line-height:28px;transform:scaleX(0.98);transform-origin:0 0;">Print Preview</div>
<div class="t" style="left:379.68px;top:865.5px;font-size:24px;line-height:28px;transform:scaleX(1.024);transform-origin:0 0;">Ctrl+Shift+P</div>
<svg class="a" style="left:23px;top:864px;" width="30" height="30" viewBox="0 0 30 30"><rect x="3" y="16" width="26" height="12" rx="3" fill="#e0e0e0" stroke="#999"/><rect x="8" y="4" width="16" height="14" fill="#fff" stroke="#bbb"/><circle cx="12" cy="10" r="6" fill="#9cc4f0" stroke="#557"/><path d="M16 14 L22 20" stroke="#555" stroke-width="2.5"/></svg>
<div class="t" style="left:70.74px;top:909.5px;font-size:24px;line-height:28px;transform:scaleX(1.03);transform-origin:0 0;">Print</div>
<div class="t" style="left:379.69px;top:909.5px;font-size:24px;line-height:28px;transform:scaleX(1.011);transform-origin:0 0;">Ctrl+P</div>
<svg class="a" style="left:23px;top:908px;" width="30" height="30" viewBox="0 0 30 30"><rect x="3" y="14" width="26" height="14" rx="3" fill="#e4e4e4" stroke="#999"/><rect x="7" y="4" width="18" height="12" fill="#fafafa" stroke="#aaa"/><path d="M16 7 L20 11 H12Z" fill="#888"/><path d="M4 22 H28" stroke="#bbb"/></svg>
<div class="t" style="left:70.81px;top:953.5px;font-size:24px;line-height:28px;transform:scaleX(0.996);transform-origin:0 0;">Print Current View</div>
<div class="t" style="left:379.66px;top:953.5px;font-size:24px;line-height:28px;transform:scaleX(1.04);transform-origin:0 0;">Ctrl+Alt+P</div>
<svg class="a" style="left:23px;top:952px;" width="30" height="30" viewBox="0 0 30 30"><rect x="9" y="18" width="22" height="12" rx="3" fill="#e4e4e4" stroke="#999"/><rect x="12" y="12" width="16" height="8" fill="#fafafa" stroke="#aaa"/><rect x="1" y="1" width="15" height="12" fill="#3a78e0" stroke="#203a80"/><rect x="3" y="3" width="11" height="8" fill="#a8c8f0"/><path d="M7 13 V17" stroke="#333" stroke-width="2"/></svg>
<div class="t" style="left:70.76px;top:997.5px;font-size:24px;line-height:28px;transform:scaleX(1.022);transform-origin:0 0;">Print Window</div>
<div class="t" style="left:379.66px;top:997.5px;font-size:24px;line-height:28px;transform:scaleX(1.04);transform-origin:0 0;">Ctrl+Alt+Shift+P</div>
<svg class="a" style="left:23px;top:996px;" width="30" height="30" viewBox="0 0 30 30"><rect x="9" y="18" width="22" height="12" rx="3" fill="#e4e4e4" stroke="#999"/><rect x="12" y="12" width="16" height="8" fill="#fafafa" stroke="#aaa"/><rect x="1" y="1" width="13" height="11" fill="#fff" stroke="#6060e0"/><rect x="3" y="4" width="9" height="6" fill="none" stroke="#777"/></svg>
<div class="t" style="left:71.76px;top:1059.5px;font-size:24px;line-height:28px;transform:scaleX(1.037);transform-origin:0 0;">Quit</div>
<svg class="a" style="left:553px;top:254px;" width="10" height="14" viewBox="0 0 10 14"><path d="M1 1 L9 7 L1 13Z" fill="#000"/></svg>
</body></html>
